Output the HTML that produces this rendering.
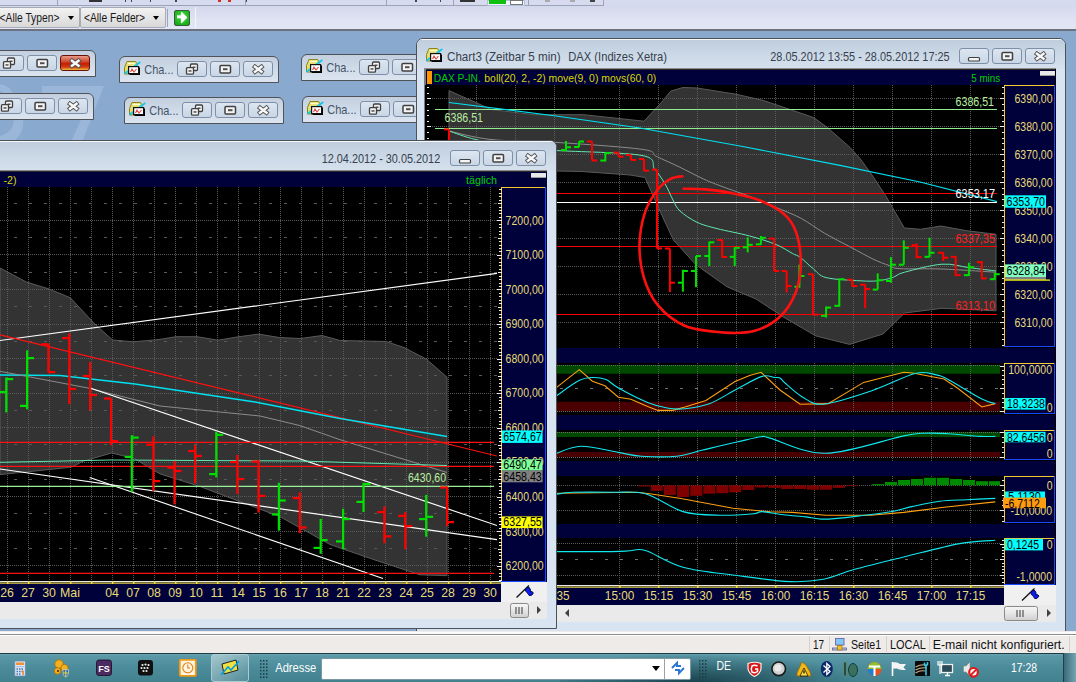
<!DOCTYPE html><html><head><meta charset="utf-8"><style>
*{margin:0;padding:0;box-sizing:border-box}
html,body{width:1076px;height:682px;overflow:hidden}
body{position:relative;background:#8aa9cf;font-family:"Liberation Sans", sans-serif;}
.a{position:absolute}
.btn{position:absolute;border:1px solid #8a9bb3;border-radius:3px;background:linear-gradient(#e4ebf4,#cbd7e6);}
.t{position:absolute;white-space:nowrap;line-height:1}
svg{position:absolute;left:0;top:0}
</style></head><body><div class="a" style="left:0;top:0;width:1076px;height:31px;background:#d5daee"></div><div class="a" style="left:0;top:0;width:604px;height:6px;background:#d6dbef;border-bottom:1px solid #9ea4b8;border-right:1px solid #9ea4b8"></div><svg width="1076" height="682"><g shape-rendering="crispEdges"><rect x="57" y="0" width="1" height="5" fill="#9ea2ae"/><rect x="245" y="0" width="1" height="5" fill="#9ea2ae"/><rect x="386" y="0" width="1" height="5" fill="#9ea2ae"/><rect x="453" y="0" width="1" height="5" fill="#9ea2ae"/><rect x="528" y="0" width="1" height="5" fill="#9ea2ae"/><rect x="89" y="0" width="13" height="2" fill="#333"/><rect x="125" y="0" width="1" height="2" fill="#444"/><rect x="131" y="0" width="1" height="2" fill="#444"/><rect x="150" y="0" width="1" height="2" fill="#444"/><rect x="175" y="0" width="2" height="2" fill="#444"/><rect x="218" y="0" width="3" height="2" fill="#d03020"/><rect x="228" y="0" width="3" height="2" fill="#d03020"/><rect x="246" y="0" width="1" height="2" fill="#444"/><rect x="415" y="0" width="2" height="2" fill="#444"/><rect x="440" y="0" width="1" height="2" fill="#444"/><rect x="460" y="0" width="15" height="2" fill="#333"/><rect x="487" y="0" width="37" height="5" fill="#f0f4fc" stroke="#b0c0d8"/><rect x="489" y="0" width="17" height="4" fill="#10c010"/><rect x="510.5" y="0" width="12" height="4" fill="#fff" stroke="#777"/><rect x="545" y="0" width="5" height="2" fill="#aaa"/><rect x="570" y="0" width="5" height="2" fill="#aaa"/><rect x="590" y="0" width="5" height="2" fill="#444"/></g></svg><div class="a" style="left:0;top:6px;width:1076px;height:23px;background:linear-gradient(#d3d8ec,#dfe3f3 60%,#e3e6f4)"></div><div class="a" style="left:0;top:29px;width:1076px;height:2px;background:#6e7280"></div><div class="a" style="left:-2px;top:7px;width:82px;height:21px;border:1px solid #a7abb5;border-radius:2px;background:linear-gradient(#f2f2f2,#e6e6e6 50%,#d8d8d8)"></div><div class="a" style="left:67.5px;top:16px;width:0;height:0;border-left:3.5px solid transparent;border-right:3.5px solid transparent;border-top:4px solid #000"></div><div class="a" style="left:80px;top:7px;width:86px;height:21px;border:1px solid #a7abb5;border-radius:2px;background:linear-gradient(#f2f2f2,#e6e6e6 50%,#d8d8d8)"></div><div class="a" style="left:153px;top:16px;width:0;height:0;border-left:3.5px solid transparent;border-right:3.5px solid transparent;border-top:4px solid #000"></div><svg width="1076" height="682"><text x="-0.50" y="21.80" font-size="12" fill="#1a1a1a" font-family="Liberation Sans" textLength="60.00" lengthAdjust="spacingAndGlyphs" >&lt;Alle Typen&gt;</text><text x="84.00" y="21.80" font-size="12" fill="#1a1a1a" font-family="Liberation Sans" textLength="61.00" lengthAdjust="spacingAndGlyphs" >&lt;Alle Felder&gt;</text></svg><div class="a" style="left:167px;top:9px;width:1px;height:18px;background:#a0a4b0"></div><div class="a" style="left:174px;top:10px;width:16px;height:16px;border-radius:2px;background:radial-gradient(circle at 50% 40%,#40e040,#10a010);border:1px solid #3a5a3a"></div><svg width="1076" height="682" style="pointer-events:none"><path d="M177 16.8h6" stroke="#fff" stroke-width="3"/><path d="M181.5 12.5 L186.5 17.5 L181.5 22.5Z" fill="#fff" stroke="#fff" stroke-width="1.2" stroke-linejoin="round"/></svg><div class="a" style="left:195px;top:7px;width:1px;height:21px;background:#a8acb8;border-right:1px solid #f4f6fc"></div><svg width="1076" height="682"><path d="M42 86 L104 86 L82 142 L71 142 L91 97 L42 97Z" fill="#9ab6d9"/><path d="M0 84 Q12 86 13 96 L3 96 Q3 92 0 91Z M14 118 L23 118 Q25 134 12 142 L0 142 L0 136 Q14 132 14 118Z" fill="#9ab6d9"/></svg><div class="a" style="left:-10px;top:50px;width:106px;height:27px;border:1px solid #4f5358;border-radius:6px 6px 0 0;background:linear-gradient(#c3cfde,#d2ddea 60%,#dbe4ef)"></div><div class="btn" style="left:-6px;top:55px;width:30px;height:16px;background:linear-gradient(#dce6f1,#c9d6e5);border-color:#7f8fa8"></div><div class="btn" style="left:27px;top:55px;width:30px;height:16px;background:linear-gradient(#dce6f1,#c9d6e5);border-color:#7f8fa8"></div><div class="btn" style="left:60px;top:55px;width:30px;height:16px;background:linear-gradient(#e89a88 0,#d04a30 40%,#c41e00 55%,#d04010 80%,#f0c040);border-color:#6a1008"></div><svg width="1076" height="682"><rect x="7.5" y="58.0" width="7" height="6.5" rx="1" fill="#f4f4f4" stroke="#404040" stroke-width="1.3"/><rect x="9.5" y="60.5" width="3" height="1.5" fill="#505050"/><rect x="3.5" y="61.7" width="7" height="6.5" rx="1" fill="#f4f4f4" stroke="#404040" stroke-width="1.3"/><rect x="5.5" y="64.2" width="3" height="1.5" fill="#505050"/><rect x="37.0" y="59.5" width="10.5" height="7.5" rx="1" fill="#f4f4f4" stroke="#404040" stroke-width="1.5"/><rect x="40.0" y="62.2" width="4.5" height="2" fill="#505050"/><path d="M70.3 59.4 L80.2 67.1 M80.2 59.4 L70.3 67.1" stroke="#505050" stroke-width="4.4"/><path d="M71.0 60.0 L79.5 66.5 M79.5 60.0 L71.0 66.5" stroke="#f8f8f8" stroke-width="2.5"/></svg><div class="a" style="left:-10px;top:93px;width:104px;height:27px;border:1px solid #4f5358;border-radius:6px 6px 0 0;background:linear-gradient(#c3cfde,#d2ddea 60%,#dbe4ef)"></div><div class="btn" style="left:-8px;top:98px;width:30px;height:16px;background:linear-gradient(#dce6f1,#c9d6e5);border-color:#7f8fa8"></div><div class="btn" style="left:25px;top:98px;width:30px;height:16px;background:linear-gradient(#dce6f1,#c9d6e5);border-color:#7f8fa8"></div><div class="btn" style="left:58px;top:98px;width:30px;height:16px;background:linear-gradient(#dce6f1,#c9d6e5);border-color:#7f8fa8"></div><svg width="1076" height="682"><rect x="5.5" y="101.0" width="7" height="6.5" rx="1" fill="#f4f4f4" stroke="#404040" stroke-width="1.3"/><rect x="7.5" y="103.5" width="3" height="1.5" fill="#505050"/><rect x="1.5" y="104.7" width="7" height="6.5" rx="1" fill="#f4f4f4" stroke="#404040" stroke-width="1.3"/><rect x="3.5" y="107.2" width="3" height="1.5" fill="#505050"/><rect x="35.0" y="102.5" width="10.5" height="7.5" rx="1" fill="#f4f4f4" stroke="#404040" stroke-width="1.5"/><rect x="38.0" y="105.2" width="4.5" height="2" fill="#505050"/><path d="M68.3 102.4 L78.2 110.1 M78.2 102.4 L68.3 110.1" stroke="#505050" stroke-width="4.4"/><path d="M69.0 103.0 L77.5 109.5 M77.5 103.0 L69.0 109.5" stroke="#f8f8f8" stroke-width="2.5"/></svg><div class="a" style="left:119px;top:56px;width:160px;height:27px;border:1px solid #4f5358;border-radius:6px 6px 0 0;background:linear-gradient(#c3cfde,#d2ddea 60%,#dbe4ef)"></div><svg width="1076" height="682"><g transform="translate(124,61)"><path d="M3 0.5 L11.5 0.5 L13 2.5 L13 6 L5 13 L0.5 13 L0.5 6.5 Z" fill="#e4dc6c" stroke="#8c8418" stroke-width="1"/><path d="M3.5 2.5 L11 2.5" stroke="#fffbd0" stroke-width="1.5"/><path d="M0.5 12.8 L16.3 1" stroke="#10c8f0" stroke-width="1.8"/><rect x="5.5" y="6.5" width="10.5" height="7.5" fill="#000"/><rect x="4.6" y="5.6" width="10" height="7" fill="#fff" stroke="#111" stroke-width="1.2"/><path d="M6.5 11 L8 8 L10 11 L12.5 8" stroke="#e04848" stroke-width="1.1" fill="none"/></g></svg><svg width="1076" height="682"><text x="144.30" y="73.50" font-size="12.4" fill="#46546a" font-family="Liberation Sans" textLength="29.20" lengthAdjust="spacingAndGlyphs" >Cha...</text></svg><div class="btn" style="left:177px;top:61px;width:30px;height:16px;background:linear-gradient(#dce6f1,#c9d6e5);border-color:#7f8fa8"></div><div class="btn" style="left:210px;top:61px;width:30px;height:16px;background:linear-gradient(#dce6f1,#c9d6e5);border-color:#7f8fa8"></div><div class="btn" style="left:243px;top:61px;width:30px;height:16px;background:linear-gradient(#dce6f1,#c9d6e5);border-color:#7f8fa8"></div><svg width="1076" height="682"><rect x="190.5" y="64.0" width="7" height="6.5" rx="1" fill="#f4f4f4" stroke="#404040" stroke-width="1.3"/><rect x="192.5" y="66.5" width="3" height="1.5" fill="#505050"/><rect x="186.5" y="67.7" width="7" height="6.5" rx="1" fill="#f4f4f4" stroke="#404040" stroke-width="1.3"/><rect x="188.5" y="70.2" width="3" height="1.5" fill="#505050"/><rect x="220.0" y="65.5" width="10.5" height="7.5" rx="1" fill="#f4f4f4" stroke="#404040" stroke-width="1.5"/><rect x="223.0" y="68.2" width="4.5" height="2" fill="#505050"/><path d="M253.3 65.4 L263.2 73.1 M263.2 65.4 L253.3 73.1" stroke="#505050" stroke-width="4.4"/><path d="M254.0 66.0 L262.5 72.5 M262.5 66.0 L254.0 72.5" stroke="#f8f8f8" stroke-width="2.5"/></svg><div class="a" style="left:124px;top:97px;width:160px;height:27px;border:1px solid #4f5358;border-radius:6px 6px 0 0;background:linear-gradient(#c3cfde,#d2ddea 60%,#dbe4ef)"></div><svg width="1076" height="682"><g transform="translate(129,102)"><path d="M3 0.5 L11.5 0.5 L13 2.5 L13 6 L5 13 L0.5 13 L0.5 6.5 Z" fill="#e4dc6c" stroke="#8c8418" stroke-width="1"/><path d="M3.5 2.5 L11 2.5" stroke="#fffbd0" stroke-width="1.5"/><path d="M0.5 12.8 L16.3 1" stroke="#10c8f0" stroke-width="1.8"/><rect x="5.5" y="6.5" width="10.5" height="7.5" fill="#000"/><rect x="4.6" y="5.6" width="10" height="7" fill="#fff" stroke="#111" stroke-width="1.2"/><path d="M6.5 11 L8 8 L10 11 L12.5 8" stroke="#e04848" stroke-width="1.1" fill="none"/></g></svg><svg width="1076" height="682"><text x="149.30" y="114.50" font-size="12.4" fill="#46546a" font-family="Liberation Sans" textLength="29.20" lengthAdjust="spacingAndGlyphs" >Cha...</text></svg><div class="btn" style="left:182px;top:102px;width:30px;height:16px;background:linear-gradient(#dce6f1,#c9d6e5);border-color:#7f8fa8"></div><div class="btn" style="left:215px;top:102px;width:30px;height:16px;background:linear-gradient(#dce6f1,#c9d6e5);border-color:#7f8fa8"></div><div class="btn" style="left:248px;top:102px;width:30px;height:16px;background:linear-gradient(#dce6f1,#c9d6e5);border-color:#7f8fa8"></div><svg width="1076" height="682"><rect x="195.5" y="105.0" width="7" height="6.5" rx="1" fill="#f4f4f4" stroke="#404040" stroke-width="1.3"/><rect x="197.5" y="107.5" width="3" height="1.5" fill="#505050"/><rect x="191.5" y="108.7" width="7" height="6.5" rx="1" fill="#f4f4f4" stroke="#404040" stroke-width="1.3"/><rect x="193.5" y="111.2" width="3" height="1.5" fill="#505050"/><rect x="225.0" y="106.5" width="10.5" height="7.5" rx="1" fill="#f4f4f4" stroke="#404040" stroke-width="1.5"/><rect x="228.0" y="109.2" width="4.5" height="2" fill="#505050"/><path d="M258.3 106.4 L268.2 114.1 M268.2 106.4 L258.3 114.1" stroke="#505050" stroke-width="4.4"/><path d="M259.0 107.0 L267.5 113.5 M267.5 107.0 L259.0 113.5" stroke="#f8f8f8" stroke-width="2.5"/></svg><div class="a" style="left:301px;top:54px;width:160px;height:27px;border:1px solid #4f5358;border-radius:6px 6px 0 0;background:linear-gradient(#c3cfde,#d2ddea 60%,#dbe4ef)"></div><svg width="1076" height="682"><g transform="translate(306,59)"><path d="M3 0.5 L11.5 0.5 L13 2.5 L13 6 L5 13 L0.5 13 L0.5 6.5 Z" fill="#e4dc6c" stroke="#8c8418" stroke-width="1"/><path d="M3.5 2.5 L11 2.5" stroke="#fffbd0" stroke-width="1.5"/><path d="M0.5 12.8 L16.3 1" stroke="#10c8f0" stroke-width="1.8"/><rect x="5.5" y="6.5" width="10.5" height="7.5" fill="#000"/><rect x="4.6" y="5.6" width="10" height="7" fill="#fff" stroke="#111" stroke-width="1.2"/><path d="M6.5 11 L8 8 L10 11 L12.5 8" stroke="#e04848" stroke-width="1.1" fill="none"/></g></svg><svg width="1076" height="682"><text x="326.30" y="71.50" font-size="12.4" fill="#46546a" font-family="Liberation Sans" textLength="29.20" lengthAdjust="spacingAndGlyphs" >Cha...</text></svg><div class="btn" style="left:359px;top:59px;width:30px;height:16px;background:linear-gradient(#dce6f1,#c9d6e5);border-color:#7f8fa8"></div><div class="btn" style="left:392px;top:59px;width:30px;height:16px;background:linear-gradient(#dce6f1,#c9d6e5);border-color:#7f8fa8"></div><div class="btn" style="left:425px;top:59px;width:30px;height:16px;background:linear-gradient(#dce6f1,#c9d6e5);border-color:#7f8fa8"></div><svg width="1076" height="682"><rect x="372.5" y="62.0" width="7" height="6.5" rx="1" fill="#f4f4f4" stroke="#404040" stroke-width="1.3"/><rect x="374.5" y="64.5" width="3" height="1.5" fill="#505050"/><rect x="368.5" y="65.7" width="7" height="6.5" rx="1" fill="#f4f4f4" stroke="#404040" stroke-width="1.3"/><rect x="370.5" y="68.2" width="3" height="1.5" fill="#505050"/><rect x="402.0" y="63.5" width="10.5" height="7.5" rx="1" fill="#f4f4f4" stroke="#404040" stroke-width="1.5"/><rect x="405.0" y="66.2" width="4.5" height="2" fill="#505050"/><path d="M435.3 63.4 L445.2 71.1 M445.2 63.4 L435.3 71.1" stroke="#505050" stroke-width="4.4"/><path d="M436.0 64.0 L444.5 70.5 M444.5 64.0 L436.0 70.5" stroke="#f8f8f8" stroke-width="2.5"/></svg><div class="a" style="left:302px;top:96px;width:160px;height:27px;border:1px solid #4f5358;border-radius:6px 6px 0 0;background:linear-gradient(#c3cfde,#d2ddea 60%,#dbe4ef)"></div><svg width="1076" height="682"><g transform="translate(307,101)"><path d="M3 0.5 L11.5 0.5 L13 2.5 L13 6 L5 13 L0.5 13 L0.5 6.5 Z" fill="#e4dc6c" stroke="#8c8418" stroke-width="1"/><path d="M3.5 2.5 L11 2.5" stroke="#fffbd0" stroke-width="1.5"/><path d="M0.5 12.8 L16.3 1" stroke="#10c8f0" stroke-width="1.8"/><rect x="5.5" y="6.5" width="10.5" height="7.5" fill="#000"/><rect x="4.6" y="5.6" width="10" height="7" fill="#fff" stroke="#111" stroke-width="1.2"/><path d="M6.5 11 L8 8 L10 11 L12.5 8" stroke="#e04848" stroke-width="1.1" fill="none"/></g></svg><svg width="1076" height="682"><text x="327.30" y="113.50" font-size="12.4" fill="#46546a" font-family="Liberation Sans" textLength="29.20" lengthAdjust="spacingAndGlyphs" >Cha...</text></svg><div class="btn" style="left:360px;top:101px;width:30px;height:16px;background:linear-gradient(#dce6f1,#c9d6e5);border-color:#7f8fa8"></div><div class="btn" style="left:393px;top:101px;width:30px;height:16px;background:linear-gradient(#dce6f1,#c9d6e5);border-color:#7f8fa8"></div><div class="btn" style="left:426px;top:101px;width:30px;height:16px;background:linear-gradient(#dce6f1,#c9d6e5);border-color:#7f8fa8"></div><svg width="1076" height="682"><rect x="373.5" y="104.0" width="7" height="6.5" rx="1" fill="#f4f4f4" stroke="#404040" stroke-width="1.3"/><rect x="375.5" y="106.5" width="3" height="1.5" fill="#505050"/><rect x="369.5" y="107.7" width="7" height="6.5" rx="1" fill="#f4f4f4" stroke="#404040" stroke-width="1.3"/><rect x="371.5" y="110.2" width="3" height="1.5" fill="#505050"/><rect x="403.0" y="105.5" width="10.5" height="7.5" rx="1" fill="#f4f4f4" stroke="#404040" stroke-width="1.5"/><rect x="406.0" y="108.2" width="4.5" height="2" fill="#505050"/><path d="M436.3 105.4 L446.2 113.1 M446.2 105.4 L436.3 113.1" stroke="#505050" stroke-width="4.4"/><path d="M437.0 106.0 L445.5 112.5 M445.5 106.0 L437.0 112.5" stroke="#f8f8f8" stroke-width="2.5"/></svg><div class="a" style="left:416px;top:38px;width:650px;height:594px;border:1px solid #4e5156;border-radius:7px 7px 0 0;background:#d6e2ef;overflow:hidden"><div class="a" style="left:0;top:0;width:100%;height:1px;background:#f4f7fb"></div><div class="a" style="left:0;top:1px;width:100%;height:29px;background:linear-gradient(#bfcddd,#cbd8e6 50%,#d6e1ed)"></div><div class="a" style="left:0;top:30px;width:100%;height:564px;background:#d8e4f1"></div></div><svg width="1076" height="682"><g transform="translate(426,48)"><path d="M3 0.5 L11.5 0.5 L13 2.5 L13 6 L5 13 L0.5 13 L0.5 6.5 Z" fill="#e4dc6c" stroke="#8c8418" stroke-width="1"/><path d="M3.5 2.5 L11 2.5" stroke="#fffbd0" stroke-width="1.5"/><path d="M0.5 12.8 L16.3 1" stroke="#10c8f0" stroke-width="1.8"/><rect x="5.5" y="6.5" width="10.5" height="7.5" fill="#000"/><rect x="4.6" y="5.6" width="10" height="7" fill="#fff" stroke="#111" stroke-width="1.2"/><path d="M6.5 11 L8 8 L10 11 L12.5 8" stroke="#e04848" stroke-width="1.1" fill="none"/></g></svg><svg width="1076" height="682"><text x="447.00" y="60.50" font-size="12.4" fill="#36404e" font-family="Liberation Sans" textLength="113.60" lengthAdjust="spacingAndGlyphs" >Chart3 (Zeitbar 5 min)</text><text x="568.30" y="60.50" font-size="12.4" fill="#36404e" font-family="Liberation Sans" textLength="98.70" lengthAdjust="spacingAndGlyphs" >DAX (Indizes Xetra)</text><text x="770.30" y="60.50" font-size="12.4" fill="#36404e" font-family="Liberation Sans" textLength="179.30" lengthAdjust="spacingAndGlyphs" >28.05.2012 13:55 - 28.05.2012 17:25</text></svg><div class="btn" style="left:959px;top:48px;width:30px;height:16px;background:linear-gradient(#dce6f1,#c9d6e5);border-color:#7f8fa8"></div><div class="btn" style="left:992px;top:48px;width:30px;height:16px;background:linear-gradient(#dce6f1,#c9d6e5);border-color:#7f8fa8"></div><div class="btn" style="left:1025px;top:48px;width:30px;height:16px;background:linear-gradient(#dce6f1,#c9d6e5);border-color:#7f8fa8"></div><svg width="1076" height="682"><rect x="968.5" y="57.5" width="11" height="3.5" rx="1" fill="#f4f4f4" stroke="#404040" stroke-width="1.2"/><rect x="1002.0" y="52.5" width="10.5" height="7.5" rx="1" fill="#f4f4f4" stroke="#404040" stroke-width="1.5"/><rect x="1005.0" y="55.2" width="4.5" height="2" fill="#505050"/><path d="M1035.3 52.4 L1045.2 60.1 M1045.2 52.4 L1035.3 60.1" stroke="#505050" stroke-width="4.4"/><path d="M1036.0 53.0 L1044.5 59.5 M1044.5 53.0 L1036.0 59.5" stroke="#f8f8f8" stroke-width="2.5"/></svg><svg width="1076" height="682"><defs><clipPath id="c3main"><rect x="425" y="85" width="575" height="263"/></clipPath><clipPath id="c3p2"><rect x="425" y="363" width="575" height="50"/></clipPath><clipPath id="c3p3"><rect x="425" y="430" width="575" height="31"/></clipPath><clipPath id="c3p4"><rect x="425" y="476" width="575" height="47"/></clipPath><clipPath id="c3p5"><rect x="425" y="537" width="575" height="47"/></clipPath></defs><rect x="424" y="69" width="632" height="536" fill="#00003a"/><rect x="424" y="68" width="632" height="1" fill="#8c8c8c" shape-rendering="crispEdges"/><rect x="424" y="69" width="632" height="1" fill="#2a2a2a" shape-rendering="crispEdges"/><rect x="424" y="69" width="2" height="553" fill="#7a7e84"/><rect x="427" y="71" width="5" height="13" fill="#ff9800"/><rect x="1040" y="71" width="15" height="5" fill="#e8e8e8"/><rect x="1040" y="75" width="15" height="1" fill="#9a9a9a"/><rect x="425" y="85" width="631" height="263" fill="#000"/><rect x="425" y="363" width="631" height="52" fill="#000"/><rect x="425" y="430" width="631" height="31" fill="#000"/><rect x="425" y="476" width="631" height="48" fill="#000"/><rect x="425" y="538" width="631" height="47" fill="#000"/><rect x="1000" y="85" width="4" height="263" fill="#000"/><rect x="1000" y="363" width="4" height="52" fill="#000"/><rect x="1000" y="430" width="4" height="31" fill="#000"/><rect x="1000" y="476" width="4" height="48" fill="#000"/><rect x="1000" y="538" width="4" height="47" fill="#000"/><g shape-rendering="crispEdges"><rect x="1004" y="85" width="51" height="262" fill="#00003a"/><rect x="1054" y="85" width="1" height="262" fill="#1848ff"/><rect x="1004" y="346" width="51" height="1" fill="#1848ff"/><rect x="1004" y="85" width="1" height="261" fill="#f8c830"/><rect x="1004" y="85" width="50" height="1" fill="#f8c830"/></g><g shape-rendering="crispEdges"><rect x="1004" y="363" width="51" height="51" fill="#00003a"/><rect x="1054" y="363" width="1" height="51" fill="#1848ff"/><rect x="1004" y="413" width="51" height="1" fill="#1848ff"/><rect x="1004" y="363" width="1" height="50" fill="#f8c830"/><rect x="1004" y="363" width="50" height="1" fill="#f8c830"/></g><g shape-rendering="crispEdges"><rect x="1004" y="430" width="51" height="30" fill="#00003a"/><rect x="1054" y="430" width="1" height="30" fill="#1848ff"/><rect x="1004" y="459" width="51" height="1" fill="#1848ff"/><rect x="1004" y="430" width="1" height="29" fill="#f8c830"/><rect x="1004" y="430" width="50" height="1" fill="#f8c830"/></g><g shape-rendering="crispEdges"><rect x="1004" y="476" width="51" height="47" fill="#00003a"/><rect x="1054" y="476" width="1" height="47" fill="#1848ff"/><rect x="1004" y="522" width="51" height="1" fill="#1848ff"/><rect x="1004" y="476" width="1" height="46" fill="#f8c830"/><rect x="1004" y="476" width="50" height="1" fill="#f8c830"/></g><g shape-rendering="crispEdges"><rect x="1004" y="538" width="51" height="47" fill="#00003a"/><rect x="1054" y="538" width="1" height="47" fill="#1848ff"/><rect x="1004" y="584" width="51" height="1" fill="#1848ff"/><rect x="1004" y="538" width="1" height="46" fill="#f8c830"/><rect x="1004" y="538" width="50" height="1" fill="#f8c830"/></g><rect x="1055" y="69" width="1" height="536" fill="#000" shape-rendering="crispEdges"/><g clip-path="url(#c3main)"><polygon points="449.0,90.6 491.6,109.6 534.5,114.7 583.6,114.7 644.0,121.2 660.0,104.0 670.7,91.1 683.0,87.5 697.0,88.0 736.0,94.2 762.7,100.3 793.4,110.6 813.8,117.7 828.0,128.0 850.4,147.8 860.0,158.5 870.5,172.8 885.5,195.4 895.6,213.0 904.4,228.0 920.7,229.3 940.8,226.0 965.8,230.6 996.0,234.3 996.0,310.8 942.0,308.3 904.6,313.0 883.0,334.0 849.6,344.4 816.0,336.0 785.0,318.0 756.0,299.0 727.0,286.8 695.7,264.5 673.4,240.0 665.0,222.0 655.0,200.0 645.0,177.5 630.0,175.0 582.0,171.5 556.0,171.0 520.0,168.0 449.0,160.0" fill="#333333" stroke="#5a5a5a" stroke-width="1"/><line x1="476.5" y1="85" x2="476.5" y2="348" stroke="#5a5a5a" stroke-width="1" stroke-dasharray="1,1" shape-rendering="crispEdges"/><line x1="515.5" y1="85" x2="515.5" y2="348" stroke="#5a5a5a" stroke-width="1" stroke-dasharray="1,1" shape-rendering="crispEdges"/><line x1="554.5" y1="85" x2="554.5" y2="348" stroke="#5a5a5a" stroke-width="1" stroke-dasharray="1,1" shape-rendering="crispEdges"/><line x1="619.5" y1="85" x2="619.5" y2="348" stroke="#5a5a5a" stroke-width="1" stroke-dasharray="1,1" shape-rendering="crispEdges"/><line x1="658.5" y1="85" x2="658.5" y2="348" stroke="#5a5a5a" stroke-width="1" stroke-dasharray="1,1" shape-rendering="crispEdges"/><line x1="697.5" y1="85" x2="697.5" y2="348" stroke="#5a5a5a" stroke-width="1" stroke-dasharray="1,1" shape-rendering="crispEdges"/><line x1="736.5" y1="85" x2="736.5" y2="348" stroke="#5a5a5a" stroke-width="1" stroke-dasharray="1,1" shape-rendering="crispEdges"/><line x1="775.5" y1="85" x2="775.5" y2="348" stroke="#5a5a5a" stroke-width="1" stroke-dasharray="1,1" shape-rendering="crispEdges"/><line x1="814.5" y1="85" x2="814.5" y2="348" stroke="#5a5a5a" stroke-width="1" stroke-dasharray="1,1" shape-rendering="crispEdges"/><line x1="853.5" y1="85" x2="853.5" y2="348" stroke="#5a5a5a" stroke-width="1" stroke-dasharray="1,1" shape-rendering="crispEdges"/><line x1="892.5" y1="85" x2="892.5" y2="348" stroke="#5a5a5a" stroke-width="1" stroke-dasharray="1,1" shape-rendering="crispEdges"/><line x1="931.5" y1="85" x2="931.5" y2="348" stroke="#5a5a5a" stroke-width="1" stroke-dasharray="1,1" shape-rendering="crispEdges"/><line x1="970.5" y1="85" x2="970.5" y2="348" stroke="#5a5a5a" stroke-width="1" stroke-dasharray="1,1" shape-rendering="crispEdges"/><line x1="432" y1="98.5" x2="1000" y2="98.5" stroke="#5a5a5a" stroke-width="1" stroke-dasharray="1,1" shape-rendering="crispEdges"/><line x1="432" y1="126.5" x2="1000" y2="126.5" stroke="#5a5a5a" stroke-width="1" stroke-dasharray="1,1" shape-rendering="crispEdges"/><line x1="432" y1="154.5" x2="1000" y2="154.5" stroke="#5a5a5a" stroke-width="1" stroke-dasharray="1,1" shape-rendering="crispEdges"/><line x1="432" y1="182.5" x2="1000" y2="182.5" stroke="#5a5a5a" stroke-width="1" stroke-dasharray="1,1" shape-rendering="crispEdges"/><line x1="432" y1="210.5" x2="1000" y2="210.5" stroke="#5a5a5a" stroke-width="1" stroke-dasharray="1,1" shape-rendering="crispEdges"/><line x1="432" y1="238.5" x2="1000" y2="238.5" stroke="#5a5a5a" stroke-width="1" stroke-dasharray="1,1" shape-rendering="crispEdges"/><line x1="432" y1="266.5" x2="1000" y2="266.5" stroke="#5a5a5a" stroke-width="1" stroke-dasharray="1,1" shape-rendering="crispEdges"/><line x1="432" y1="294.5" x2="1000" y2="294.5" stroke="#5a5a5a" stroke-width="1" stroke-dasharray="1,1" shape-rendering="crispEdges"/><line x1="432" y1="322.5" x2="1000" y2="322.5" stroke="#5a5a5a" stroke-width="1" stroke-dasharray="1,1" shape-rendering="crispEdges"/><rect x="427" y="87" width="2" height="1" fill="#f0f0f0" shape-rendering="crispEdges"/><rect x="427" y="93" width="2" height="1" fill="#f0f0f0" shape-rendering="crispEdges"/><rect x="427" y="98" width="4" height="1" fill="#f0f0f0" shape-rendering="crispEdges"/><rect x="427" y="104" width="2" height="1" fill="#f0f0f0" shape-rendering="crispEdges"/><rect x="427" y="110" width="2" height="1" fill="#f0f0f0" shape-rendering="crispEdges"/><rect x="427" y="115" width="2" height="1" fill="#f0f0f0" shape-rendering="crispEdges"/><rect x="427" y="121" width="2" height="1" fill="#f0f0f0" shape-rendering="crispEdges"/><rect x="427" y="126" width="4" height="1" fill="#f0f0f0" shape-rendering="crispEdges"/><rect x="427" y="132" width="2" height="1" fill="#f0f0f0" shape-rendering="crispEdges"/><rect x="427" y="138" width="2" height="1" fill="#f0f0f0" shape-rendering="crispEdges"/><rect x="427" y="143" width="2" height="1" fill="#f0f0f0" shape-rendering="crispEdges"/><rect x="427" y="149" width="2" height="1" fill="#f0f0f0" shape-rendering="crispEdges"/><rect x="427" y="154" width="4" height="1" fill="#f0f0f0" shape-rendering="crispEdges"/><rect x="427" y="160" width="2" height="1" fill="#f0f0f0" shape-rendering="crispEdges"/><rect x="427" y="166" width="2" height="1" fill="#f0f0f0" shape-rendering="crispEdges"/><rect x="427" y="171" width="2" height="1" fill="#f0f0f0" shape-rendering="crispEdges"/><rect x="427" y="177" width="2" height="1" fill="#f0f0f0" shape-rendering="crispEdges"/><rect x="427" y="182" width="4" height="1" fill="#f0f0f0" shape-rendering="crispEdges"/><rect x="427" y="188" width="2" height="1" fill="#f0f0f0" shape-rendering="crispEdges"/><rect x="427" y="194" width="2" height="1" fill="#f0f0f0" shape-rendering="crispEdges"/><rect x="427" y="199" width="2" height="1" fill="#f0f0f0" shape-rendering="crispEdges"/><rect x="427" y="205" width="2" height="1" fill="#f0f0f0" shape-rendering="crispEdges"/><rect x="427" y="210" width="4" height="1" fill="#f0f0f0" shape-rendering="crispEdges"/><rect x="427" y="216" width="2" height="1" fill="#f0f0f0" shape-rendering="crispEdges"/><rect x="427" y="222" width="2" height="1" fill="#f0f0f0" shape-rendering="crispEdges"/><rect x="427" y="227" width="2" height="1" fill="#f0f0f0" shape-rendering="crispEdges"/><rect x="427" y="233" width="2" height="1" fill="#f0f0f0" shape-rendering="crispEdges"/><rect x="427" y="238" width="4" height="1" fill="#f0f0f0" shape-rendering="crispEdges"/><rect x="427" y="244" width="2" height="1" fill="#f0f0f0" shape-rendering="crispEdges"/><rect x="427" y="250" width="2" height="1" fill="#f0f0f0" shape-rendering="crispEdges"/><rect x="427" y="255" width="2" height="1" fill="#f0f0f0" shape-rendering="crispEdges"/><rect x="427" y="261" width="2" height="1" fill="#f0f0f0" shape-rendering="crispEdges"/><rect x="427" y="266" width="4" height="1" fill="#f0f0f0" shape-rendering="crispEdges"/><rect x="427" y="272" width="2" height="1" fill="#f0f0f0" shape-rendering="crispEdges"/><rect x="427" y="278" width="2" height="1" fill="#f0f0f0" shape-rendering="crispEdges"/><rect x="427" y="283" width="2" height="1" fill="#f0f0f0" shape-rendering="crispEdges"/><rect x="427" y="289" width="2" height="1" fill="#f0f0f0" shape-rendering="crispEdges"/><rect x="427" y="294" width="4" height="1" fill="#f0f0f0" shape-rendering="crispEdges"/><rect x="427" y="300" width="2" height="1" fill="#f0f0f0" shape-rendering="crispEdges"/><rect x="427" y="306" width="2" height="1" fill="#f0f0f0" shape-rendering="crispEdges"/><rect x="427" y="311" width="2" height="1" fill="#f0f0f0" shape-rendering="crispEdges"/><rect x="427" y="317" width="2" height="1" fill="#f0f0f0" shape-rendering="crispEdges"/><rect x="427" y="322" width="4" height="1" fill="#f0f0f0" shape-rendering="crispEdges"/><rect x="427" y="328" width="2" height="1" fill="#f0f0f0" shape-rendering="crispEdges"/><rect x="427" y="334" width="2" height="1" fill="#f0f0f0" shape-rendering="crispEdges"/><rect x="427" y="339" width="2" height="1" fill="#f0f0f0" shape-rendering="crispEdges"/><rect x="427" y="345" width="2" height="1" fill="#f0f0f0" shape-rendering="crispEdges"/><line x1="435" y1="109.5" x2="997" y2="109.5" stroke="#90ee90" stroke-width="1" shape-rendering="crispEdges"/><line x1="435" y1="128.5" x2="997" y2="128.5" stroke="#90ee90" stroke-width="1" shape-rendering="crispEdges"/><line x1="425" y1="193.5" x2="997" y2="193.5" stroke="#ff0000" stroke-width="1" shape-rendering="crispEdges"/><line x1="425" y1="202.5" x2="997" y2="202.5" stroke="#ffffff" stroke-width="1.2" shape-rendering="crispEdges"/><line x1="425" y1="246.5" x2="997" y2="246.5" stroke="#ff0000" stroke-width="1" shape-rendering="crispEdges"/><line x1="425" y1="314.5" x2="997" y2="314.5" stroke="#ff0000" stroke-width="1" shape-rendering="crispEdges"/><polyline points="449,102.5 556,116 640,128 740,146 840,165.3 920,182 997,201.7" fill="none" stroke="#00e0f0" stroke-width="1.2"/><path d="M449.0 131.0 C456.0 132.4 473.2 137.6 491.0 139.5 C508.8 141.4 530.8 140.8 556.0 142.4 C581.2 144.0 625.2 147.0 642.0 149.3 C658.8 151.7 650.3 153.6 656.5 156.5 C662.7 159.4 671.1 163.0 679.0 166.8 C686.9 170.6 696.2 175.7 703.7 179.1 C711.2 182.5 714.9 183.8 724.3 187.3 C733.7 190.8 751.4 196.8 760.0 200.2 C768.6 203.5 769.3 204.4 776.0 207.4 C782.7 210.4 792.2 213.6 800.3 217.9 C808.4 222.2 816.2 228.3 824.5 233.2 C832.8 238.0 842.2 242.7 850.3 247.0 C858.4 251.3 866.4 255.9 872.9 259.0 C879.4 262.1 884.5 263.9 889.0 265.5 C893.5 267.1 891.2 268.1 900.0 268.7 C908.8 269.3 926.0 268.4 942.0 269.0 C958.0 269.6 987.0 271.7 996.0 272.2" fill="none" stroke="#8c8c8c" stroke-width="1"/><path d="M449.0 131.0 C453.5 132.4 464.2 136.8 476.0 139.6 C487.8 142.4 506.7 146.2 520.0 148.0 C533.3 149.8 535.7 149.2 556.0 150.5 C576.3 151.8 625.6 152.4 642.0 155.5 C658.4 158.6 650.7 164.2 654.5 168.8 C658.3 173.4 661.6 178.0 664.7 183.2 C667.8 188.4 670.5 195.4 673.0 200.0 C675.5 204.6 676.0 207.3 680.0 211.0 C684.0 214.7 691.1 219.5 697.3 222.4 C703.5 225.3 708.3 226.3 717.0 228.6 C725.7 230.9 739.9 233.3 749.7 236.0 C759.5 238.7 768.9 241.6 776.0 244.5 C783.1 247.4 788.2 251.2 792.3 253.4 C796.3 255.6 796.8 254.8 800.3 257.4 C803.8 259.9 808.9 265.3 813.2 268.7 C817.5 272.1 818.3 275.6 826.1 277.6 C833.9 279.6 851.4 280.3 860.0 280.8 C868.6 281.3 872.3 281.3 877.7 280.8 C883.1 280.3 887.8 279.0 892.3 277.6 C896.8 276.2 896.3 274.4 904.6 272.2 C912.9 270.0 931.2 264.9 942.0 264.2 C952.8 263.4 960.4 266.6 969.4 267.7 C978.4 268.8 991.6 270.4 996.0 271.0" fill="none" stroke="#60e8b0" stroke-width="1"/><rect x="448" y="129.4" width="2" height="30.599999999999994" fill="#ff0000"/><rect x="444" y="128.4" width="5" height="2" fill="#ff0000"/><rect x="449" y="159" width="5" height="2" fill="#ff0000"/><rect x="565" y="141" width="2" height="9.800000000000011" fill="#00e000"/><rect x="561" y="149" width="5" height="2" fill="#00e000"/><rect x="566" y="146.3" width="5" height="2" fill="#00e000"/><rect x="578" y="141.5" width="2" height="5.800000000000011" fill="#00e000"/><rect x="574" y="146" width="5" height="2" fill="#00e000"/><rect x="579" y="140.5" width="5" height="2" fill="#00e000"/><rect x="591" y="141.5" width="2" height="19.0" fill="#ff0000"/><rect x="587" y="140.5" width="5" height="2" fill="#ff0000"/><rect x="592" y="159.5" width="5" height="2" fill="#ff0000"/><rect x="604.3" y="152.6" width="2" height="8.800000000000011" fill="#00e000"/><rect x="600.3" y="159.5" width="5" height="2" fill="#00e000"/><rect x="605.3" y="152" width="5" height="2" fill="#00e000"/><rect x="617.5" y="152.6" width="2" height="4.0" fill="#ff0000"/><rect x="613.5" y="151.6" width="5" height="2" fill="#ff0000"/><rect x="618.5" y="155.6" width="5" height="2" fill="#ff0000"/><rect x="630" y="155.2" width="2" height="4.800000000000011" fill="#ff0000"/><rect x="626" y="154" width="5" height="2" fill="#ff0000"/><rect x="631" y="159" width="5" height="2" fill="#ff0000"/><rect x="643" y="159" width="2" height="11.699999999999989" fill="#ff0000"/><rect x="639" y="158" width="5" height="2" fill="#ff0000"/><rect x="644" y="169.7" width="5" height="2" fill="#ff0000"/><rect x="656" y="169.6" width="2" height="78.9" fill="#ff0000"/><rect x="652" y="168.6" width="5" height="2" fill="#ff0000"/><rect x="657" y="247.5" width="5" height="2" fill="#ff0000"/><rect x="668.9" y="248.5" width="2" height="43.5" fill="#ff0000"/><rect x="664.9" y="247.5" width="5" height="2" fill="#ff0000"/><rect x="669.9" y="281.7" width="5" height="2" fill="#ff0000"/><rect x="681.9" y="269.7" width="2" height="22.0" fill="#00e000"/><rect x="677.9" y="281.7" width="5" height="2" fill="#00e000"/><rect x="682.9" y="270" width="5" height="2" fill="#00e000"/><rect x="695" y="256" width="2" height="31.19999999999999" fill="#00e000"/><rect x="691" y="270" width="5" height="2" fill="#00e000"/><rect x="696" y="255" width="5" height="2" fill="#00e000"/><rect x="708.3" y="241.6" width="2" height="24.400000000000006" fill="#00e000"/><rect x="704.3" y="255" width="5" height="2" fill="#00e000"/><rect x="709.3" y="241.3" width="5" height="2" fill="#00e000"/><rect x="721.2" y="239.8" width="2" height="17.5" fill="#ff0000"/><rect x="717.2" y="239" width="5" height="2" fill="#ff0000"/><rect x="722.2" y="256" width="5" height="2" fill="#ff0000"/><rect x="733.7" y="247.3" width="2" height="18.69999999999999" fill="#00e000"/><rect x="729.7" y="255.8" width="5" height="2" fill="#00e000"/><rect x="734.7" y="246.8" width="5" height="2" fill="#00e000"/><rect x="746.7" y="237.3" width="2" height="15.0" fill="#00e000"/><rect x="742.7" y="246.3" width="5" height="2" fill="#00e000"/><rect x="747.7" y="243.8" width="5" height="2" fill="#00e000"/><rect x="759.9" y="236" width="2" height="8.800000000000011" fill="#00e000"/><rect x="755.9" y="243.3" width="5" height="2" fill="#00e000"/><rect x="760.9" y="236.8" width="5" height="2" fill="#00e000"/><rect x="773.1" y="238.6" width="2" height="32.400000000000006" fill="#ff0000"/><rect x="769.1" y="237.6" width="5" height="2" fill="#ff0000"/><rect x="774.1" y="270" width="5" height="2" fill="#ff0000"/><rect x="785.6" y="271" width="2" height="21.399999999999977" fill="#ff0000"/><rect x="781.6" y="270" width="5" height="2" fill="#ff0000"/><rect x="786.6" y="285" width="5" height="2" fill="#ff0000"/><rect x="798.4" y="264.7" width="2" height="22.900000000000034" fill="#00e000"/><rect x="794.4" y="285.7" width="5" height="2" fill="#00e000"/><rect x="799.4" y="275" width="5" height="2" fill="#00e000"/><rect x="811.9" y="274.2" width="2" height="40.80000000000001" fill="#ff0000"/><rect x="807.9" y="273.2" width="5" height="2" fill="#ff0000"/><rect x="812.9" y="313.6" width="5" height="2" fill="#ff0000"/><rect x="825.1" y="306.6" width="2" height="11.0" fill="#00e000"/><rect x="821.1" y="314.8" width="5" height="2" fill="#00e000"/><rect x="826.1" y="306.6" width="5" height="2" fill="#00e000"/><rect x="838.3" y="278.4" width="2" height="28.200000000000045" fill="#00e000"/><rect x="834.3" y="304.8" width="5" height="2" fill="#00e000"/><rect x="839.3" y="278.2" width="5" height="2" fill="#00e000"/><rect x="851.3" y="279.7" width="2" height="7.0" fill="#ff0000"/><rect x="847.3" y="278.7" width="5" height="2" fill="#ff0000"/><rect x="852.3" y="285" width="5" height="2" fill="#ff0000"/><rect x="864.2" y="284.2" width="2" height="24.100000000000023" fill="#ff0000"/><rect x="860.2" y="283.7" width="5" height="2" fill="#ff0000"/><rect x="865.2" y="288.1" width="5" height="2" fill="#ff0000"/><rect x="876.7" y="273.4" width="2" height="16.200000000000045" fill="#00e000"/><rect x="872.7" y="288.6" width="5" height="2" fill="#00e000"/><rect x="877.7" y="279.2" width="5" height="2" fill="#00e000"/><rect x="889.9" y="257.2" width="2" height="25.5" fill="#00e000"/><rect x="885.9" y="280" width="5" height="2" fill="#00e000"/><rect x="890.9" y="263.7" width="5" height="2" fill="#00e000"/><rect x="902.8" y="240.3" width="2" height="24.399999999999977" fill="#00e000"/><rect x="898.8" y="263.7" width="5" height="2" fill="#00e000"/><rect x="903.8" y="246.8" width="5" height="2" fill="#00e000"/><rect x="915.6" y="243.5" width="2" height="14.199999999999989" fill="#ff0000"/><rect x="911.6" y="244.3" width="5" height="2" fill="#ff0000"/><rect x="916.6" y="256.2" width="5" height="2" fill="#ff0000"/><rect x="928.5" y="237.8" width="2" height="19.399999999999977" fill="#00e000"/><rect x="924.5" y="255.8" width="5" height="2" fill="#00e000"/><rect x="929.5" y="251.8" width="5" height="2" fill="#00e000"/><rect x="942.2" y="252.3" width="2" height="8.699999999999989" fill="#ff0000"/><rect x="938.2" y="251.8" width="5" height="2" fill="#ff0000"/><rect x="943.2" y="256.7" width="5" height="2" fill="#ff0000"/><rect x="954.7" y="256" width="2" height="20" fill="#ff0000"/><rect x="950.7" y="255.8" width="5" height="2" fill="#ff0000"/><rect x="955.7" y="274.2" width="5" height="2" fill="#ff0000"/><rect x="967.9" y="262.7" width="2" height="13.300000000000011" fill="#00e000"/><rect x="963.9" y="274.2" width="5" height="2" fill="#00e000"/><rect x="968.9" y="266.2" width="5" height="2" fill="#00e000"/><rect x="980.8" y="261" width="2" height="18.19999999999999" fill="#ff0000"/><rect x="976.8" y="261.2" width="5" height="2" fill="#ff0000"/><rect x="981.8" y="277.4" width="5" height="2" fill="#ff0000"/><rect x="993.8" y="272.7" width="2" height="7.0" fill="#00e000"/><rect x="989.8" y="278.2" width="5" height="2" fill="#00e000"/><rect x="994.8" y="273.2" width="5" height="2" fill="#00e000"/><path d="M682.4 176.2 C680.5 176.6 675.2 176.4 671.0 178.7 C666.8 181.0 661.7 184.4 657.4 190.0 C653.1 195.6 648.0 203.3 645.0 212.4 C642.0 221.5 639.7 234.0 639.5 244.8 C639.3 255.6 640.7 267.2 643.7 277.2 C646.7 287.2 650.5 296.5 657.4 304.6 C664.2 312.7 673.6 321.1 684.8 325.8 C696.0 330.5 713.1 331.8 724.7 332.6 C736.4 333.4 745.6 333.4 754.7 330.8 C763.9 328.2 772.8 323.4 779.6 317.0 C786.5 310.6 792.3 301.3 795.8 292.2 C799.3 283.1 800.8 272.2 800.8 262.2 C800.8 252.2 798.8 240.0 796.0 232.0 C793.2 224.0 790.0 219.2 784.0 214.0 C778.0 208.8 768.2 203.9 760.0 200.5 C751.8 197.1 743.9 195.5 734.7 193.7 C725.5 191.8 713.3 190.2 704.8 189.4 C696.3 188.6 687.1 188.8 683.6 188.7" fill="none" stroke="#ff1010" stroke-width="2.6" stroke-linejoin="round" stroke-linecap="round"/><text x="444.60" y="121.60" font-size="12" fill="#b8f0a0" font-family="Liberation Sans" textLength="38.40" lengthAdjust="spacingAndGlyphs" >6386,51</text><text x="955.60" y="105.50" font-size="12" fill="#b8f0a0" font-family="Liberation Sans" textLength="38.40" lengthAdjust="spacingAndGlyphs" >6386,51</text><text x="955.50" y="198.30" font-size="12" fill="#ffffff" font-family="Liberation Sans" textLength="39.50" lengthAdjust="spacingAndGlyphs" >6353,17</text><text x="955.50" y="242.50" font-size="12" fill="#ff2020" font-family="Liberation Sans" textLength="39.50" lengthAdjust="spacingAndGlyphs" >6337,35</text><text x="955.50" y="310.00" font-size="12" fill="#ff2020" font-family="Liberation Sans" textLength="39.50" lengthAdjust="spacingAndGlyphs" >6313,10</text></g><text x="433.80" y="81.80" font-size="11.8" fill="#00d000" font-family="Liberation Sans" textLength="47.00" lengthAdjust="spacingAndGlyphs" >DAX P-IN.</text><text x="484.30" y="81.80" font-size="11.8" fill="#d8d800" font-family="Liberation Sans" textLength="172.00" lengthAdjust="spacingAndGlyphs" >boll(20, 2, -2) move(9, 0) movs(60, 0)</text><text x="971.20" y="81.80" font-size="11.8" fill="#00d000" font-family="Liberation Sans" textLength="29.00" lengthAdjust="spacingAndGlyphs" >5 mins</text><rect x="1001.5" y="87" width="2.5" height="1" fill="#f0f0f0" shape-rendering="crispEdges"/><rect x="1001.5" y="93" width="2.5" height="1" fill="#f0f0f0" shape-rendering="crispEdges"/><rect x="1000" y="98" width="4" height="1" fill="#f0f0f0" shape-rendering="crispEdges"/><rect x="1001.5" y="104" width="2.5" height="1" fill="#f0f0f0" shape-rendering="crispEdges"/><rect x="1001.5" y="110" width="2.5" height="1" fill="#f0f0f0" shape-rendering="crispEdges"/><rect x="1001.5" y="115" width="2.5" height="1" fill="#f0f0f0" shape-rendering="crispEdges"/><rect x="1001.5" y="121" width="2.5" height="1" fill="#f0f0f0" shape-rendering="crispEdges"/><rect x="1000" y="126" width="4" height="1" fill="#f0f0f0" shape-rendering="crispEdges"/><rect x="1001.5" y="132" width="2.5" height="1" fill="#f0f0f0" shape-rendering="crispEdges"/><rect x="1001.5" y="138" width="2.5" height="1" fill="#f0f0f0" shape-rendering="crispEdges"/><rect x="1001.5" y="143" width="2.5" height="1" fill="#f0f0f0" shape-rendering="crispEdges"/><rect x="1001.5" y="149" width="2.5" height="1" fill="#f0f0f0" shape-rendering="crispEdges"/><rect x="1000" y="154" width="4" height="1" fill="#f0f0f0" shape-rendering="crispEdges"/><rect x="1001.5" y="160" width="2.5" height="1" fill="#f0f0f0" shape-rendering="crispEdges"/><rect x="1001.5" y="166" width="2.5" height="1" fill="#f0f0f0" shape-rendering="crispEdges"/><rect x="1001.5" y="171" width="2.5" height="1" fill="#f0f0f0" shape-rendering="crispEdges"/><rect x="1001.5" y="177" width="2.5" height="1" fill="#f0f0f0" shape-rendering="crispEdges"/><rect x="1000" y="182" width="4" height="1" fill="#f0f0f0" shape-rendering="crispEdges"/><rect x="1001.5" y="188" width="2.5" height="1" fill="#f0f0f0" shape-rendering="crispEdges"/><rect x="1001.5" y="194" width="2.5" height="1" fill="#f0f0f0" shape-rendering="crispEdges"/><rect x="1001.5" y="199" width="2.5" height="1" fill="#f0f0f0" shape-rendering="crispEdges"/><rect x="1001.5" y="205" width="2.5" height="1" fill="#f0f0f0" shape-rendering="crispEdges"/><rect x="1000" y="210" width="4" height="1" fill="#f0f0f0" shape-rendering="crispEdges"/><rect x="1001.5" y="216" width="2.5" height="1" fill="#f0f0f0" shape-rendering="crispEdges"/><rect x="1001.5" y="222" width="2.5" height="1" fill="#f0f0f0" shape-rendering="crispEdges"/><rect x="1001.5" y="227" width="2.5" height="1" fill="#f0f0f0" shape-rendering="crispEdges"/><rect x="1001.5" y="233" width="2.5" height="1" fill="#f0f0f0" shape-rendering="crispEdges"/><rect x="1000" y="238" width="4" height="1" fill="#f0f0f0" shape-rendering="crispEdges"/><rect x="1001.5" y="244" width="2.5" height="1" fill="#f0f0f0" shape-rendering="crispEdges"/><rect x="1001.5" y="250" width="2.5" height="1" fill="#f0f0f0" shape-rendering="crispEdges"/><rect x="1001.5" y="255" width="2.5" height="1" fill="#f0f0f0" shape-rendering="crispEdges"/><rect x="1001.5" y="261" width="2.5" height="1" fill="#f0f0f0" shape-rendering="crispEdges"/><rect x="1000" y="266" width="4" height="1" fill="#f0f0f0" shape-rendering="crispEdges"/><rect x="1001.5" y="272" width="2.5" height="1" fill="#f0f0f0" shape-rendering="crispEdges"/><rect x="1001.5" y="278" width="2.5" height="1" fill="#f0f0f0" shape-rendering="crispEdges"/><rect x="1001.5" y="283" width="2.5" height="1" fill="#f0f0f0" shape-rendering="crispEdges"/><rect x="1001.5" y="289" width="2.5" height="1" fill="#f0f0f0" shape-rendering="crispEdges"/><rect x="1000" y="294" width="4" height="1" fill="#f0f0f0" shape-rendering="crispEdges"/><rect x="1001.5" y="300" width="2.5" height="1" fill="#f0f0f0" shape-rendering="crispEdges"/><rect x="1001.5" y="306" width="2.5" height="1" fill="#f0f0f0" shape-rendering="crispEdges"/><rect x="1001.5" y="311" width="2.5" height="1" fill="#f0f0f0" shape-rendering="crispEdges"/><rect x="1001.5" y="317" width="2.5" height="1" fill="#f0f0f0" shape-rendering="crispEdges"/><rect x="1000" y="322" width="4" height="1" fill="#f0f0f0" shape-rendering="crispEdges"/><rect x="1001.5" y="328" width="2.5" height="1" fill="#f0f0f0" shape-rendering="crispEdges"/><rect x="1001.5" y="334" width="2.5" height="1" fill="#f0f0f0" shape-rendering="crispEdges"/><rect x="1001.5" y="339" width="2.5" height="1" fill="#f0f0f0" shape-rendering="crispEdges"/><rect x="1001.5" y="345" width="2.5" height="1" fill="#f0f0f0" shape-rendering="crispEdges"/><text x="1014.50" y="102.60" font-size="12" fill="#e6dc78" font-family="Liberation Sans" textLength="38.00" lengthAdjust="spacingAndGlyphs" >6390,00</text><text x="1014.50" y="130.60" font-size="12" fill="#e6dc78" font-family="Liberation Sans" textLength="38.00" lengthAdjust="spacingAndGlyphs" >6380,00</text><text x="1014.50" y="158.60" font-size="12" fill="#e6dc78" font-family="Liberation Sans" textLength="38.00" lengthAdjust="spacingAndGlyphs" >6370,00</text><text x="1014.50" y="186.60" font-size="12" fill="#e6dc78" font-family="Liberation Sans" textLength="38.00" lengthAdjust="spacingAndGlyphs" >6360,00</text><text x="1014.50" y="214.60" font-size="12" fill="#e6dc78" font-family="Liberation Sans" textLength="38.00" lengthAdjust="spacingAndGlyphs" >6350,00</text><text x="1014.50" y="242.60" font-size="12" fill="#e6dc78" font-family="Liberation Sans" textLength="38.00" lengthAdjust="spacingAndGlyphs" >6340,00</text><text x="1014.50" y="270.60" font-size="12" fill="#e6dc78" font-family="Liberation Sans" textLength="38.00" lengthAdjust="spacingAndGlyphs" >6330,00</text><text x="1014.50" y="298.60" font-size="12" fill="#e6dc78" font-family="Liberation Sans" textLength="38.00" lengthAdjust="spacingAndGlyphs" >6320,00</text><text x="1014.50" y="326.60" font-size="12" fill="#e6dc78" font-family="Liberation Sans" textLength="38.00" lengthAdjust="spacingAndGlyphs" >6310,00</text><rect x="1005" y="195.3" width="41" height="12.4" fill="#00ffff"/><text x="1006.50" y="205.50" font-size="12" fill="#000" font-family="Liberation Sans" textLength="38.50" lengthAdjust="spacingAndGlyphs" >6353,70</text><rect x="1005" y="277" width="41" height="3" fill="#808080"/><rect x="1005" y="279.5" width="45" height="1.2" fill="#ffff00"/><rect x="1005" y="264.4" width="41" height="12.6" fill="#80ffc0"/><text x="1006.50" y="275.00" font-size="12" fill="#000" font-family="Liberation Sans" textLength="38.50" lengthAdjust="spacingAndGlyphs" >6328,84</text><g clip-path="url(#c3p2)"><rect x="425" y="365" width="575" height="8.7" fill="#004a00"/><rect x="425" y="401.8" width="575" height="9.4" fill="#4a0000"/><line x1="476.5" y1="363" x2="476.5" y2="413" stroke="#5a5a5a" stroke-width="1" stroke-dasharray="1,1" shape-rendering="crispEdges"/><line x1="515.5" y1="363" x2="515.5" y2="413" stroke="#5a5a5a" stroke-width="1" stroke-dasharray="1,1" shape-rendering="crispEdges"/><line x1="554.5" y1="363" x2="554.5" y2="413" stroke="#5a5a5a" stroke-width="1" stroke-dasharray="1,1" shape-rendering="crispEdges"/><line x1="619.5" y1="363" x2="619.5" y2="413" stroke="#5a5a5a" stroke-width="1" stroke-dasharray="1,1" shape-rendering="crispEdges"/><line x1="658.5" y1="363" x2="658.5" y2="413" stroke="#5a5a5a" stroke-width="1" stroke-dasharray="1,1" shape-rendering="crispEdges"/><line x1="697.5" y1="363" x2="697.5" y2="413" stroke="#5a5a5a" stroke-width="1" stroke-dasharray="1,1" shape-rendering="crispEdges"/><line x1="736.5" y1="363" x2="736.5" y2="413" stroke="#5a5a5a" stroke-width="1" stroke-dasharray="1,1" shape-rendering="crispEdges"/><line x1="775.5" y1="363" x2="775.5" y2="413" stroke="#5a5a5a" stroke-width="1" stroke-dasharray="1,1" shape-rendering="crispEdges"/><line x1="814.5" y1="363" x2="814.5" y2="413" stroke="#5a5a5a" stroke-width="1" stroke-dasharray="1,1" shape-rendering="crispEdges"/><line x1="853.5" y1="363" x2="853.5" y2="413" stroke="#5a5a5a" stroke-width="1" stroke-dasharray="1,1" shape-rendering="crispEdges"/><line x1="892.5" y1="363" x2="892.5" y2="413" stroke="#5a5a5a" stroke-width="1" stroke-dasharray="1,1" shape-rendering="crispEdges"/><line x1="931.5" y1="363" x2="931.5" y2="413" stroke="#5a5a5a" stroke-width="1" stroke-dasharray="1,1" shape-rendering="crispEdges"/><line x1="970.5" y1="363" x2="970.5" y2="413" stroke="#5a5a5a" stroke-width="1" stroke-dasharray="1,1" shape-rendering="crispEdges"/><line x1="425" y1="365.5" x2="1000" y2="365.5" stroke="#6a6a6a" stroke-width="1" stroke-dasharray="1,1" shape-rendering="crispEdges"/><line x1="425" y1="411.5" x2="1000" y2="411.5" stroke="#6a6a6a" stroke-width="1" stroke-dasharray="1,1" shape-rendering="crispEdges"/><line x1="425" y1="388.5" x2="1000" y2="388.5" stroke="#707070" stroke-width="1" stroke-dasharray="3,12" shape-rendering="crispEdges"/><polyline points="556.0,387.9 579.3,369.6 592.4,381.2 604.9,385.8 618.4,397.2 631.0,399.3 647.6,406.6 658.0,410.4 672.6,410.4 685.0,407.0 705.9,400.4 735.0,381.6 749.6,375.4 761.0,372.3 780.0,390.0 800.1,404.2 828.0,403.6 863.7,382.4 903.8,372.3 912.8,373.0 944.0,379.0 957.4,388.0 981.9,407.0 995.3,403.6" fill="none" stroke="#ffa010" stroke-width="1.1"/><path d="M556.0 396.2 C559.8 393.6 572.8 383.7 578.9 380.6 C585.0 377.5 587.9 377.7 592.4 377.5 C596.9 377.3 601.7 377.9 606.0 379.6 C610.3 381.3 611.5 384.1 618.4 387.9 C625.3 391.7 639.3 399.0 647.6 402.4 C655.9 405.8 662.2 407.2 668.4 408.3 C674.6 409.4 678.1 409.5 685.0 408.7 C691.9 407.9 701.3 406.8 710.0 403.5 C718.7 400.2 728.3 393.4 737.0 388.9 C745.7 384.4 755.7 378.3 762.0 376.4 C768.3 374.5 771.6 377.2 774.6 377.5 C777.6 377.8 778.2 377.0 780.0 378.0 C781.8 379.0 781.9 380.4 785.6 383.5 C789.3 386.6 796.0 393.4 802.3 396.9 C808.6 400.3 812.1 405.1 823.5 404.2 C834.9 403.3 855.1 396.4 870.4 391.3 C885.6 386.2 904.2 376.3 915.0 373.5 C925.8 370.7 929.4 373.6 935.0 374.6 C940.6 375.6 940.7 375.6 948.5 379.7 C956.3 383.8 974.1 395.1 981.9 399.1 C989.7 403.1 993.1 402.9 995.3 403.6" fill="none" stroke="#10e8f0" stroke-width="1.1"/></g><g clip-path="url(#c3p3)"><rect x="425" y="432" width="575" height="5" fill="#004a00"/><rect x="425" y="452" width="575" height="5" fill="#4a0000"/><line x1="476.5" y1="430" x2="476.5" y2="461" stroke="#5a5a5a" stroke-width="1" stroke-dasharray="1,1" shape-rendering="crispEdges"/><line x1="515.5" y1="430" x2="515.5" y2="461" stroke="#5a5a5a" stroke-width="1" stroke-dasharray="1,1" shape-rendering="crispEdges"/><line x1="554.5" y1="430" x2="554.5" y2="461" stroke="#5a5a5a" stroke-width="1" stroke-dasharray="1,1" shape-rendering="crispEdges"/><line x1="619.5" y1="430" x2="619.5" y2="461" stroke="#5a5a5a" stroke-width="1" stroke-dasharray="1,1" shape-rendering="crispEdges"/><line x1="658.5" y1="430" x2="658.5" y2="461" stroke="#5a5a5a" stroke-width="1" stroke-dasharray="1,1" shape-rendering="crispEdges"/><line x1="697.5" y1="430" x2="697.5" y2="461" stroke="#5a5a5a" stroke-width="1" stroke-dasharray="1,1" shape-rendering="crispEdges"/><line x1="736.5" y1="430" x2="736.5" y2="461" stroke="#5a5a5a" stroke-width="1" stroke-dasharray="1,1" shape-rendering="crispEdges"/><line x1="775.5" y1="430" x2="775.5" y2="461" stroke="#5a5a5a" stroke-width="1" stroke-dasharray="1,1" shape-rendering="crispEdges"/><line x1="814.5" y1="430" x2="814.5" y2="461" stroke="#5a5a5a" stroke-width="1" stroke-dasharray="1,1" shape-rendering="crispEdges"/><line x1="853.5" y1="430" x2="853.5" y2="461" stroke="#5a5a5a" stroke-width="1" stroke-dasharray="1,1" shape-rendering="crispEdges"/><line x1="892.5" y1="430" x2="892.5" y2="461" stroke="#5a5a5a" stroke-width="1" stroke-dasharray="1,1" shape-rendering="crispEdges"/><line x1="931.5" y1="430" x2="931.5" y2="461" stroke="#5a5a5a" stroke-width="1" stroke-dasharray="1,1" shape-rendering="crispEdges"/><line x1="970.5" y1="430" x2="970.5" y2="461" stroke="#5a5a5a" stroke-width="1" stroke-dasharray="1,1" shape-rendering="crispEdges"/><line x1="425" y1="432.5" x2="1000" y2="432.5" stroke="#6a6a6a" stroke-width="1" stroke-dasharray="1,1" shape-rendering="crispEdges"/><line x1="425" y1="457.5" x2="1000" y2="457.5" stroke="#6a6a6a" stroke-width="1" stroke-dasharray="1,1" shape-rendering="crispEdges"/><path d="M556.0 453.4 C560.2 452.2 570.6 446.4 581.0 446.2 C591.4 446.0 608.4 450.7 618.4 452.4 C628.4 454.1 631.6 455.6 641.3 456.2 C651.0 456.8 666.6 457.2 676.7 456.2 C686.8 455.2 691.7 452.7 701.7 450.3 C711.8 447.9 727.1 444.2 737.0 442.0 C746.9 439.8 755.5 437.4 761.0 436.8 C766.5 436.2 759.2 435.4 770.0 438.1 C780.8 440.9 803.5 453.7 825.8 453.3 C848.1 452.9 887.1 439.2 903.8 435.9 C920.5 432.5 918.5 433.6 926.0 433.2 C933.5 432.8 939.5 433.2 948.5 433.7 C957.5 434.2 971.9 435.9 979.7 436.4 C987.5 436.8 992.7 436.4 995.3 436.4" fill="none" stroke="#10e8f0" stroke-width="1.1"/></g><g clip-path="url(#c3p4)"><line x1="476.5" y1="476" x2="476.5" y2="523" stroke="#5a5a5a" stroke-width="1" stroke-dasharray="1,1" shape-rendering="crispEdges"/><line x1="515.5" y1="476" x2="515.5" y2="523" stroke="#5a5a5a" stroke-width="1" stroke-dasharray="1,1" shape-rendering="crispEdges"/><line x1="554.5" y1="476" x2="554.5" y2="523" stroke="#5a5a5a" stroke-width="1" stroke-dasharray="1,1" shape-rendering="crispEdges"/><line x1="619.5" y1="476" x2="619.5" y2="523" stroke="#5a5a5a" stroke-width="1" stroke-dasharray="1,1" shape-rendering="crispEdges"/><line x1="658.5" y1="476" x2="658.5" y2="523" stroke="#5a5a5a" stroke-width="1" stroke-dasharray="1,1" shape-rendering="crispEdges"/><line x1="697.5" y1="476" x2="697.5" y2="523" stroke="#5a5a5a" stroke-width="1" stroke-dasharray="1,1" shape-rendering="crispEdges"/><line x1="736.5" y1="476" x2="736.5" y2="523" stroke="#5a5a5a" stroke-width="1" stroke-dasharray="1,1" shape-rendering="crispEdges"/><line x1="775.5" y1="476" x2="775.5" y2="523" stroke="#5a5a5a" stroke-width="1" stroke-dasharray="1,1" shape-rendering="crispEdges"/><line x1="814.5" y1="476" x2="814.5" y2="523" stroke="#5a5a5a" stroke-width="1" stroke-dasharray="1,1" shape-rendering="crispEdges"/><line x1="853.5" y1="476" x2="853.5" y2="523" stroke="#5a5a5a" stroke-width="1" stroke-dasharray="1,1" shape-rendering="crispEdges"/><line x1="892.5" y1="476" x2="892.5" y2="523" stroke="#5a5a5a" stroke-width="1" stroke-dasharray="1,1" shape-rendering="crispEdges"/><line x1="931.5" y1="476" x2="931.5" y2="523" stroke="#5a5a5a" stroke-width="1" stroke-dasharray="1,1" shape-rendering="crispEdges"/><line x1="970.5" y1="476" x2="970.5" y2="523" stroke="#5a5a5a" stroke-width="1" stroke-dasharray="1,1" shape-rendering="crispEdges"/><line x1="425" y1="485.5" x2="1000" y2="485.5" stroke="#5a5a5a" stroke-width="1" stroke-dasharray="1,1" shape-rendering="crispEdges"/><line x1="425" y1="510.5" x2="1000" y2="510.5" stroke="#5a5a5a" stroke-width="1" stroke-dasharray="1,1" shape-rendering="crispEdges"/><rect x="638" y="485.3" width="12" height="1.2" fill="#800000"/><rect x="650.7" y="485.3" width="12" height="5.5" fill="#800000"/><rect x="663.8" y="485.3" width="12" height="9.7" fill="#800000"/><rect x="677.1" y="485.3" width="12" height="11.7" fill="#800000"/><rect x="690.3" y="485.3" width="12" height="10.5" fill="#800000"/><rect x="703.3" y="485.3" width="12" height="8.4" fill="#800000"/><rect x="716.3" y="485.3" width="12" height="7.9" fill="#800000"/><rect x="729.3" y="485.3" width="12" height="7.0" fill="#800000"/><rect x="742.3" y="485.3" width="12" height="4.7" fill="#800000"/><rect x="755.3" y="485.3" width="12" height="2.2" fill="#800000"/><rect x="768.3" y="485.3" width="12" height="2.6" fill="#800000"/><rect x="781" y="485.3" width="12" height="3.7" fill="#800000"/><rect x="794" y="485.3" width="12" height="3.7" fill="#800000"/><rect x="807" y="485.3" width="12" height="4.4" fill="#800000"/><rect x="820" y="485.3" width="12" height="4.4" fill="#800000"/><rect x="833" y="485.3" width="12" height="2.6" fill="#800000"/><rect x="846" y="485.3" width="12" height="0.8" fill="#800000"/><rect x="872" y="484.1" width="12" height="1.2" fill="#008a00"/><rect x="885" y="481.9" width="12" height="3.4" fill="#008a00"/><rect x="898" y="480" width="12" height="5.3" fill="#008a00"/><rect x="911" y="479" width="12" height="6.3" fill="#008a00"/><rect x="924" y="477.8" width="12" height="7.5" fill="#008a00"/><rect x="937" y="477.8" width="12" height="7.5" fill="#008a00"/><rect x="950" y="479" width="12" height="6.3" fill="#008a00"/><rect x="963" y="480" width="12" height="5.3" fill="#008a00"/><rect x="976" y="481.2" width="12" height="4.1" fill="#008a00"/><rect x="989" y="481.2" width="12" height="4.1" fill="#008a00"/><polyline points="556.0,493.3 637.2,492.3 649.7,493.7 680.9,498.5 733.0,508.3 770.0,511.8 792.3,512.4 825.8,515.3 870.4,515.3 903.8,512.4 944.0,507.3 995.3,501.9" fill="none" stroke="#ffa010" stroke-width="1.1"/><path d="M556.0 494.3 C558.8 494.0 563.3 492.6 572.7 492.3 C582.1 492.0 600.1 492.1 612.2 492.3 C624.3 492.5 633.7 490.5 645.5 493.7 C657.3 496.9 670.5 508.0 683.0 511.6 C695.5 515.2 708.6 514.9 720.4 515.2 C732.2 515.6 746.9 514.3 753.8 513.7 C760.7 513.1 757.1 511.4 762.0 511.6 C766.9 511.8 776.1 513.8 783.4 514.7 C790.7 515.6 799.4 516.2 805.7 516.9 C812.0 517.6 816.1 518.9 821.3 519.1 C826.5 519.4 829.8 519.0 836.9 518.4 C844.0 517.8 854.8 516.4 863.7 515.3 C872.6 514.2 882.3 513.3 890.5 511.8 C898.7 510.3 904.6 508.1 912.8 506.4 C921.0 504.6 930.6 502.4 939.5 501.3 C948.4 500.2 957.0 500.2 966.3 499.7 C975.6 499.2 990.5 498.6 995.3 498.4" fill="none" stroke="#10e8f0" stroke-width="1.1"/></g><g clip-path="url(#c3p5)"><line x1="476.5" y1="537" x2="476.5" y2="584" stroke="#5a5a5a" stroke-width="1" stroke-dasharray="1,1" shape-rendering="crispEdges"/><line x1="515.5" y1="537" x2="515.5" y2="584" stroke="#5a5a5a" stroke-width="1" stroke-dasharray="1,1" shape-rendering="crispEdges"/><line x1="554.5" y1="537" x2="554.5" y2="584" stroke="#5a5a5a" stroke-width="1" stroke-dasharray="1,1" shape-rendering="crispEdges"/><line x1="619.5" y1="537" x2="619.5" y2="584" stroke="#5a5a5a" stroke-width="1" stroke-dasharray="1,1" shape-rendering="crispEdges"/><line x1="658.5" y1="537" x2="658.5" y2="584" stroke="#5a5a5a" stroke-width="1" stroke-dasharray="1,1" shape-rendering="crispEdges"/><line x1="697.5" y1="537" x2="697.5" y2="584" stroke="#5a5a5a" stroke-width="1" stroke-dasharray="1,1" shape-rendering="crispEdges"/><line x1="736.5" y1="537" x2="736.5" y2="584" stroke="#5a5a5a" stroke-width="1" stroke-dasharray="1,1" shape-rendering="crispEdges"/><line x1="775.5" y1="537" x2="775.5" y2="584" stroke="#5a5a5a" stroke-width="1" stroke-dasharray="1,1" shape-rendering="crispEdges"/><line x1="814.5" y1="537" x2="814.5" y2="584" stroke="#5a5a5a" stroke-width="1" stroke-dasharray="1,1" shape-rendering="crispEdges"/><line x1="853.5" y1="537" x2="853.5" y2="584" stroke="#5a5a5a" stroke-width="1" stroke-dasharray="1,1" shape-rendering="crispEdges"/><line x1="892.5" y1="537" x2="892.5" y2="584" stroke="#5a5a5a" stroke-width="1" stroke-dasharray="1,1" shape-rendering="crispEdges"/><line x1="931.5" y1="537" x2="931.5" y2="584" stroke="#5a5a5a" stroke-width="1" stroke-dasharray="1,1" shape-rendering="crispEdges"/><line x1="970.5" y1="537" x2="970.5" y2="584" stroke="#5a5a5a" stroke-width="1" stroke-dasharray="1,1" shape-rendering="crispEdges"/><line x1="425" y1="543.5" x2="1000" y2="543.5" stroke="#5a5a5a" stroke-width="1" stroke-dasharray="1,1" shape-rendering="crispEdges"/><line x1="425" y1="575.5" x2="1000" y2="575.5" stroke="#5a5a5a" stroke-width="1" stroke-dasharray="1,1" shape-rendering="crispEdges"/><line x1="425" y1="559.5" x2="1000" y2="559.5" stroke="#707070" stroke-width="1" stroke-dasharray="3,12" shape-rendering="crispEdges"/><path d="M556.0 551.6 C565.4 551.6 599.9 551.7 612.2 551.6 C624.5 551.5 624.5 551.0 630.0 550.8 C635.5 550.6 636.7 547.8 645.5 550.5 C654.3 553.2 667.8 563.0 683.0 567.2 C698.2 571.4 719.2 573.1 737.0 575.5 C754.8 577.9 775.6 581.0 790.0 581.6 C804.4 582.2 812.7 581.3 823.5 579.3 C834.3 577.2 841.4 573.0 854.8 569.3 C868.2 565.6 886.3 561.3 903.8 557.0 C921.3 552.7 944.4 546.4 959.6 543.6 C974.9 540.8 989.3 540.8 995.3 540.3" fill="none" stroke="#10e8f0" stroke-width="1.1"/></g><rect x="1000" y="366" width="4" height="1" fill="#f0f0f0" shape-rendering="crispEdges"/><rect x="1001.5" y="370" width="2.5" height="1" fill="#f0f0f0" shape-rendering="crispEdges"/><rect x="1001.5" y="375" width="2.5" height="1" fill="#f0f0f0" shape-rendering="crispEdges"/><rect x="1001.5" y="379" width="2.5" height="1" fill="#f0f0f0" shape-rendering="crispEdges"/><rect x="1001.5" y="384" width="2.5" height="1" fill="#f0f0f0" shape-rendering="crispEdges"/><rect x="1000" y="388" width="4" height="1" fill="#f0f0f0" shape-rendering="crispEdges"/><rect x="1001.5" y="393" width="2.5" height="1" fill="#f0f0f0" shape-rendering="crispEdges"/><rect x="1001.5" y="398" width="2.5" height="1" fill="#f0f0f0" shape-rendering="crispEdges"/><rect x="1001.5" y="402" width="2.5" height="1" fill="#f0f0f0" shape-rendering="crispEdges"/><rect x="1001.5" y="407" width="2.5" height="1" fill="#f0f0f0" shape-rendering="crispEdges"/><rect x="1000" y="411" width="4" height="1" fill="#f0f0f0" shape-rendering="crispEdges"/><rect x="1000" y="432" width="4" height="1" fill="#f0f0f0" shape-rendering="crispEdges"/><rect x="1001.5" y="437" width="2.5" height="1" fill="#f0f0f0" shape-rendering="crispEdges"/><rect x="1001.5" y="442" width="2.5" height="1" fill="#f0f0f0" shape-rendering="crispEdges"/><rect x="1001.5" y="447" width="2.5" height="1" fill="#f0f0f0" shape-rendering="crispEdges"/><rect x="1001.5" y="452" width="2.5" height="1" fill="#f0f0f0" shape-rendering="crispEdges"/><rect x="1000" y="457" width="4" height="1" fill="#f0f0f0" shape-rendering="crispEdges"/><rect x="1001.5" y="480" width="2.5" height="1" fill="#f0f0f0" shape-rendering="crispEdges"/><rect x="1000" y="485" width="4" height="1" fill="#f0f0f0" shape-rendering="crispEdges"/><rect x="1001.5" y="490" width="2.5" height="1" fill="#f0f0f0" shape-rendering="crispEdges"/><rect x="1001.5" y="495" width="2.5" height="1" fill="#f0f0f0" shape-rendering="crispEdges"/><rect x="1001.5" y="500" width="2.5" height="1" fill="#f0f0f0" shape-rendering="crispEdges"/><rect x="1001.5" y="505" width="2.5" height="1" fill="#f0f0f0" shape-rendering="crispEdges"/><rect x="1000" y="510" width="4" height="1" fill="#f0f0f0" shape-rendering="crispEdges"/><rect x="1001.5" y="516" width="2.5" height="1" fill="#f0f0f0" shape-rendering="crispEdges"/><rect x="1001.5" y="521" width="2.5" height="1" fill="#f0f0f0" shape-rendering="crispEdges"/><rect x="1001.5" y="540" width="2.5" height="1" fill="#f0f0f0" shape-rendering="crispEdges"/><rect x="1000" y="544" width="4" height="1" fill="#f0f0f0" shape-rendering="crispEdges"/><rect x="1001.5" y="547" width="2.5" height="1" fill="#f0f0f0" shape-rendering="crispEdges"/><rect x="1001.5" y="550" width="2.5" height="1" fill="#f0f0f0" shape-rendering="crispEdges"/><rect x="1001.5" y="553" width="2.5" height="1" fill="#f0f0f0" shape-rendering="crispEdges"/><rect x="1001.5" y="556" width="2.5" height="1" fill="#f0f0f0" shape-rendering="crispEdges"/><rect x="1000" y="559" width="4" height="1" fill="#f0f0f0" shape-rendering="crispEdges"/><rect x="1001.5" y="563" width="2.5" height="1" fill="#f0f0f0" shape-rendering="crispEdges"/><rect x="1001.5" y="566" width="2.5" height="1" fill="#f0f0f0" shape-rendering="crispEdges"/><rect x="1001.5" y="569" width="2.5" height="1" fill="#f0f0f0" shape-rendering="crispEdges"/><rect x="1001.5" y="572" width="2.5" height="1" fill="#f0f0f0" shape-rendering="crispEdges"/><rect x="1000" y="575" width="4" height="1" fill="#f0f0f0" shape-rendering="crispEdges"/><rect x="1001.5" y="578" width="2.5" height="1" fill="#f0f0f0" shape-rendering="crispEdges"/><rect x="1001.5" y="582" width="2.5" height="1" fill="#f0f0f0" shape-rendering="crispEdges"/><text x="1008.21" y="374.00" font-size="12" fill="#e6dc78" font-family="Liberation Sans" textLength="43.79" lengthAdjust="spacingAndGlyphs" >100,0000</text><rect x="1005" y="398" width="40.5" height="11.6" fill="#00ffff"/><text x="1007.00" y="408.00" font-size="12" fill="#000" font-family="Liberation Sans" textLength="37.95" lengthAdjust="spacingAndGlyphs" >18,3238</text><text x="1046.66" y="412.00" font-size="12" fill="#e6dc78" font-family="Liberation Sans" textLength="5.84" lengthAdjust="spacingAndGlyphs" >0</text><rect x="1005" y="431.8" width="40.5" height="10.5" fill="#00ffff"/><text x="1007.00" y="441.50" font-size="12" fill="#000" font-family="Liberation Sans" textLength="37.95" lengthAdjust="spacingAndGlyphs" >82,6456</text><text x="1046.66" y="441.50" font-size="12" fill="#e6dc78" font-family="Liberation Sans" textLength="5.84" lengthAdjust="spacingAndGlyphs" >0</text><text x="1046.66" y="458.00" font-size="12" fill="#e6dc78" font-family="Liberation Sans" textLength="5.84" lengthAdjust="spacingAndGlyphs" >0</text><text x="1046.66" y="489.50" font-size="12" fill="#e6dc78" font-family="Liberation Sans" textLength="5.84" lengthAdjust="spacingAndGlyphs" >0</text><text x="1010.55" y="514.50" font-size="12" fill="#e6dc78" font-family="Liberation Sans" textLength="41.45" lengthAdjust="spacingAndGlyphs" >-10,0000</text><rect x="1005" y="491.5" width="40" height="7" fill="#00ffff"/><text x="1008.00" y="501.00" font-size="12" fill="#000" font-family="Liberation Sans" textLength="33.00" lengthAdjust="spacingAndGlyphs" >5,1130</text><rect x="1003" y="497.6" width="43" height="10.6" fill="#ff9c10"/><text x="1005.00" y="507.50" font-size="12" fill="#000" font-family="Liberation Sans" textLength="34.83" lengthAdjust="spacingAndGlyphs" >-6,7112</text><rect x="1005" y="538.8" width="38" height="11.6" fill="#00ffff"/><text x="1007.00" y="549.00" font-size="12" fill="#000" font-family="Liberation Sans" textLength="32.11" lengthAdjust="spacingAndGlyphs" >0,1245</text><text x="1046.66" y="549.00" font-size="12" fill="#e6dc78" font-family="Liberation Sans" textLength="5.84" lengthAdjust="spacingAndGlyphs" >0</text><text x="1016.39" y="580.50" font-size="12" fill="#e6dc78" font-family="Liberation Sans" textLength="35.61" lengthAdjust="spacingAndGlyphs" >-1,0000</text><rect x="425" y="585" width="579" height="1" fill="#e8e8e8"/><rect x="425" y="586.5" width="579" height="1.2" fill="#f0e040"/><rect x="1004" y="585" width="52" height="20" fill="#f0f0f0"/><rect x="475.9" y="585" width="1.5" height="3" fill="#f0e040"/><rect x="514.8" y="585" width="1.5" height="3" fill="#f0e040"/><rect x="553.8" y="585" width="1.5" height="3" fill="#f0e040"/><rect x="619.1" y="585" width="1.5" height="3" fill="#f0e040"/><rect x="658.0" y="585" width="1.5" height="3" fill="#f0e040"/><rect x="697.0" y="585" width="1.5" height="3" fill="#f0e040"/><rect x="736.0" y="585" width="1.5" height="3" fill="#f0e040"/><rect x="775.0" y="585" width="1.5" height="3" fill="#f0e040"/><rect x="814.0" y="585" width="1.5" height="3" fill="#f0e040"/><rect x="853.0" y="585" width="1.5" height="3" fill="#f0e040"/><rect x="892.0" y="585" width="1.5" height="3" fill="#f0e040"/><rect x="931.0" y="585" width="1.5" height="3" fill="#f0e040"/><rect x="970.0" y="585" width="1.5" height="3" fill="#f0e040"/><text x="556.45" y="600.30" font-size="12.8" fill="#e6dc78" font-family="Liberation Sans" textLength="13.10" lengthAdjust="spacingAndGlyphs" >35</text><text x="604.87" y="600.30" font-size="12.8" fill="#e6dc78" font-family="Liberation Sans" textLength="29.47" lengthAdjust="spacingAndGlyphs" >15:00</text><text x="643.77" y="600.30" font-size="12.8" fill="#e6dc78" font-family="Liberation Sans" textLength="29.47" lengthAdjust="spacingAndGlyphs" >15:15</text><text x="682.77" y="600.30" font-size="12.8" fill="#e6dc78" font-family="Liberation Sans" textLength="29.47" lengthAdjust="spacingAndGlyphs" >15:30</text><text x="721.77" y="600.30" font-size="12.8" fill="#e6dc78" font-family="Liberation Sans" textLength="29.47" lengthAdjust="spacingAndGlyphs" >15:45</text><text x="760.77" y="600.30" font-size="12.8" fill="#e6dc78" font-family="Liberation Sans" textLength="29.47" lengthAdjust="spacingAndGlyphs" >16:00</text><text x="799.77" y="600.30" font-size="12.8" fill="#e6dc78" font-family="Liberation Sans" textLength="29.47" lengthAdjust="spacingAndGlyphs" >16:15</text><text x="838.77" y="600.30" font-size="12.8" fill="#e6dc78" font-family="Liberation Sans" textLength="29.47" lengthAdjust="spacingAndGlyphs" >16:30</text><text x="877.77" y="600.30" font-size="12.8" fill="#e6dc78" font-family="Liberation Sans" textLength="29.47" lengthAdjust="spacingAndGlyphs" >16:45</text><text x="916.77" y="600.30" font-size="12.8" fill="#e6dc78" font-family="Liberation Sans" textLength="29.47" lengthAdjust="spacingAndGlyphs" >17:00</text><text x="955.77" y="600.30" font-size="12.8" fill="#e6dc78" font-family="Liberation Sans" textLength="29.47" lengthAdjust="spacingAndGlyphs" >17:15</text><path d="M1022 600.5 L1034.5 588.5" stroke="#111" stroke-width="1.3"/><path d="M1030.8 592.2 Q1032.5 589.8 1034.8 590.6 Q1036.5 592.6 1035.8 594.6 Q1038.5 594.2 1038.8 596.2 Q1037.6 599 1034.8 598.6 Q1033.8 596.6 1032.4 595.6 Q1031 594.6 1030.8 592.2Z" fill="#0a1ee8" stroke="#000050" stroke-width="1"/><rect x="425" y="605" width="631" height="17" fill="#eaeaea"/><rect x="1004.5" y="606.5" width="33" height="14" rx="2" fill="url(#thumbg)" stroke="#8a8a8a"/><defs><linearGradient id="thumbg" x1="0" y1="0" x2="0" y2="1"><stop offset="0" stop-color="#f6f6f6"/><stop offset="0.5" stop-color="#e6e6e6"/><stop offset="1" stop-color="#cfcfcf"/></linearGradient></defs><path d="M1017 610v7M1020 610v7M1023 610v7" stroke="#555" stroke-width="1.2"/><path d="M1047 609 L1051 613 L1047 617Z" fill="#404040"/><path d="M569 609 L565 613 L569 617Z" fill="#404040"/></svg><div class="a" style="left:-20px;top:140px;width:577px;height:489px;border:1px solid #4e5156;border-radius:7px 7px 0 0;background:#d6e2ef;overflow:hidden"><div class="a" style="left:0;top:0;width:100%;height:1px;background:#f4f7fb"></div><div class="a" style="left:0;top:1px;width:100%;height:29px;background:linear-gradient(#bfcddd,#cbd8e6 50%,#d6e1ed)"></div><div class="a" style="left:0;top:30px;width:100%;height:459px;background:#d8e4f1"></div></div><svg width="1076" height="682"><text x="321.70" y="162.80" font-size="12.4" fill="#36404e" font-family="Liberation Sans" textLength="118.50" lengthAdjust="spacingAndGlyphs" >12.04.2012 - 30.05.2012</text></svg><div class="btn" style="left:450px;top:150px;width:30px;height:16px;background:linear-gradient(#dce6f1,#c9d6e5);border-color:#7f8fa8"></div><div class="btn" style="left:483px;top:150px;width:30px;height:16px;background:linear-gradient(#dce6f1,#c9d6e5);border-color:#7f8fa8"></div><div class="btn" style="left:516px;top:150px;width:30px;height:16px;background:linear-gradient(#dce6f1,#c9d6e5);border-color:#7f8fa8"></div><svg width="1076" height="682"><rect x="459.5" y="159.5" width="11" height="3.5" rx="1" fill="#f4f4f4" stroke="#404040" stroke-width="1.2"/><rect x="493.0" y="154.5" width="10.5" height="7.5" rx="1" fill="#f4f4f4" stroke="#404040" stroke-width="1.5"/><rect x="496.0" y="157.2" width="4.5" height="2" fill="#505050"/><path d="M526.3 154.4 L536.2 162.1 M536.2 154.4 L526.3 162.1" stroke="#505050" stroke-width="4.4"/><path d="M527.0 155.0 L535.5 161.5 M535.5 155.0 L527.0 161.5" stroke="#f8f8f8" stroke-width="2.5"/></svg><svg width="1076" height="682"><defs><clipPath id="lwmain"><rect x="0" y="187" width="497" height="394"/></clipPath></defs><rect x="0" y="172" width="547" height="430" fill="#00003a"/><rect x="0" y="170" width="547" height="1" fill="#8c8c8c" shape-rendering="crispEdges"/><rect x="0" y="171" width="547" height="1" fill="#2a2a2a" shape-rendering="crispEdges"/><rect x="531" y="173" width="15" height="5" fill="#e8e8e8"/><rect x="531" y="177" width="15" height="1" fill="#9a9a9a"/><rect x="0" y="187" width="501" height="394" fill="#000"/><g shape-rendering="crispEdges"><rect x="501" y="187" width="46" height="395" fill="#00003a"/><rect x="545" y="187" width="1" height="395" fill="#1848ff"/><rect x="501" y="581" width="45" height="1" fill="#1848ff"/><rect x="501" y="187" width="1" height="394" fill="#f8c830"/><rect x="501" y="187" width="44" height="1" fill="#f8c830"/></g><g clip-path="url(#lwmain)"><polygon points="0.0,268.0 26.4,282.0 49.2,289.0 70.3,297.8 95.0,324.2 112.6,340.0 133.7,341.8 160.0,339.4 175.8,336.7 197.0,336.7 218.0,340.2 239.0,336.7 258.5,334.1 279.7,337.6 300.8,338.5 322.0,335.5 340.0,340.5 386.0,341.5 404.0,347.5 426.2,359.0 447.0,377.2 447.0,575.7 420.0,574.8 380.0,561.7 330.0,544.5 280.0,516.7 200.0,486.5 160.0,473.9 133.8,458.3 111.5,453.0 83.3,461.2 71.4,467.2 0.0,474.6" fill="#333333" stroke="#5a5a5a" stroke-width="1"/><line x1="7.5" y1="187" x2="7.5" y2="581" stroke="#5a5a5a" stroke-dasharray="1,1" shape-rendering="crispEdges"/><line x1="28.5" y1="187" x2="28.5" y2="581" stroke="#5a5a5a" stroke-dasharray="1,1" shape-rendering="crispEdges"/><line x1="49.5" y1="187" x2="49.5" y2="581" stroke="#5a5a5a" stroke-dasharray="1,1" shape-rendering="crispEdges"/><line x1="70.5" y1="187" x2="70.5" y2="581" stroke="#5a5a5a" stroke-dasharray="1,1" shape-rendering="crispEdges"/><line x1="91.5" y1="187" x2="91.5" y2="581" stroke="#5a5a5a" stroke-dasharray="1,1" shape-rendering="crispEdges"/><line x1="112.5" y1="187" x2="112.5" y2="581" stroke="#5a5a5a" stroke-dasharray="1,1" shape-rendering="crispEdges"/><line x1="133.5" y1="187" x2="133.5" y2="581" stroke="#5a5a5a" stroke-dasharray="1,1" shape-rendering="crispEdges"/><line x1="154.5" y1="187" x2="154.5" y2="581" stroke="#5a5a5a" stroke-dasharray="1,1" shape-rendering="crispEdges"/><line x1="175.5" y1="187" x2="175.5" y2="581" stroke="#5a5a5a" stroke-dasharray="1,1" shape-rendering="crispEdges"/><line x1="196.5" y1="187" x2="196.5" y2="581" stroke="#5a5a5a" stroke-dasharray="1,1" shape-rendering="crispEdges"/><line x1="217.5" y1="187" x2="217.5" y2="581" stroke="#5a5a5a" stroke-dasharray="1,1" shape-rendering="crispEdges"/><line x1="238.5" y1="187" x2="238.5" y2="581" stroke="#5a5a5a" stroke-dasharray="1,1" shape-rendering="crispEdges"/><line x1="259.5" y1="187" x2="259.5" y2="581" stroke="#5a5a5a" stroke-dasharray="1,1" shape-rendering="crispEdges"/><line x1="280.5" y1="187" x2="280.5" y2="581" stroke="#5a5a5a" stroke-dasharray="1,1" shape-rendering="crispEdges"/><line x1="301.5" y1="187" x2="301.5" y2="581" stroke="#5a5a5a" stroke-dasharray="1,1" shape-rendering="crispEdges"/><line x1="322.5" y1="187" x2="322.5" y2="581" stroke="#5a5a5a" stroke-dasharray="1,1" shape-rendering="crispEdges"/><line x1="343.5" y1="187" x2="343.5" y2="581" stroke="#5a5a5a" stroke-dasharray="1,1" shape-rendering="crispEdges"/><line x1="364.5" y1="187" x2="364.5" y2="581" stroke="#5a5a5a" stroke-dasharray="1,1" shape-rendering="crispEdges"/><line x1="385.5" y1="187" x2="385.5" y2="581" stroke="#5a5a5a" stroke-dasharray="1,1" shape-rendering="crispEdges"/><line x1="406.5" y1="187" x2="406.5" y2="581" stroke="#5a5a5a" stroke-dasharray="1,1" shape-rendering="crispEdges"/><line x1="427.5" y1="187" x2="427.5" y2="581" stroke="#5a5a5a" stroke-dasharray="1,1" shape-rendering="crispEdges"/><line x1="448.5" y1="187" x2="448.5" y2="581" stroke="#5a5a5a" stroke-dasharray="1,1" shape-rendering="crispEdges"/><line x1="469.5" y1="187" x2="469.5" y2="581" stroke="#5a5a5a" stroke-dasharray="1,1" shape-rendering="crispEdges"/><line x1="490.5" y1="187" x2="490.5" y2="581" stroke="#5a5a5a" stroke-dasharray="1,1" shape-rendering="crispEdges"/><line x1="0" y1="220.5" x2="497" y2="220.5" stroke="#5a5a5a" stroke-dasharray="1,1" shape-rendering="crispEdges"/><line x1="0" y1="254.5" x2="497" y2="254.5" stroke="#5a5a5a" stroke-dasharray="1,1" shape-rendering="crispEdges"/><line x1="0" y1="289.5" x2="497" y2="289.5" stroke="#5a5a5a" stroke-dasharray="1,1" shape-rendering="crispEdges"/><line x1="0" y1="324.5" x2="497" y2="324.5" stroke="#5a5a5a" stroke-dasharray="1,1" shape-rendering="crispEdges"/><line x1="0" y1="358.5" x2="497" y2="358.5" stroke="#5a5a5a" stroke-dasharray="1,1" shape-rendering="crispEdges"/><line x1="0" y1="393.5" x2="497" y2="393.5" stroke="#5a5a5a" stroke-dasharray="1,1" shape-rendering="crispEdges"/><line x1="0" y1="427.5" x2="497" y2="427.5" stroke="#5a5a5a" stroke-dasharray="1,1" shape-rendering="crispEdges"/><line x1="0" y1="462.5" x2="497" y2="462.5" stroke="#5a5a5a" stroke-dasharray="1,1" shape-rendering="crispEdges"/><line x1="0" y1="496.5" x2="497" y2="496.5" stroke="#5a5a5a" stroke-dasharray="1,1" shape-rendering="crispEdges"/><line x1="0" y1="531.5" x2="497" y2="531.5" stroke="#5a5a5a" stroke-dasharray="1,1" shape-rendering="crispEdges"/><line x1="0" y1="565.5" x2="497" y2="565.5" stroke="#5a5a5a" stroke-dasharray="1,1" shape-rendering="crispEdges"/><line x1="14" y1="203.5" x2="497" y2="203.5" stroke="#5a5a5a" stroke-dasharray="3,12" shape-rendering="crispEdges"/><line x1="14" y1="237.5" x2="497" y2="237.5" stroke="#5a5a5a" stroke-dasharray="3,12" shape-rendering="crispEdges"/><line x1="14" y1="272.5" x2="497" y2="272.5" stroke="#5a5a5a" stroke-dasharray="3,12" shape-rendering="crispEdges"/><line x1="14" y1="306.5" x2="497" y2="306.5" stroke="#5a5a5a" stroke-dasharray="3,12" shape-rendering="crispEdges"/><line x1="14" y1="341.5" x2="497" y2="341.5" stroke="#5a5a5a" stroke-dasharray="3,12" shape-rendering="crispEdges"/><line x1="14" y1="375.5" x2="497" y2="375.5" stroke="#5a5a5a" stroke-dasharray="3,12" shape-rendering="crispEdges"/><line x1="14" y1="410.5" x2="497" y2="410.5" stroke="#5a5a5a" stroke-dasharray="3,12" shape-rendering="crispEdges"/><line x1="14" y1="444.5" x2="497" y2="444.5" stroke="#5a5a5a" stroke-dasharray="3,12" shape-rendering="crispEdges"/><line x1="14" y1="479.5" x2="497" y2="479.5" stroke="#5a5a5a" stroke-dasharray="3,12" shape-rendering="crispEdges"/><line x1="14" y1="513.5" x2="497" y2="513.5" stroke="#5a5a5a" stroke-dasharray="3,12" shape-rendering="crispEdges"/><line x1="14" y1="548.5" x2="497" y2="548.5" stroke="#5a5a5a" stroke-dasharray="3,12" shape-rendering="crispEdges"/><line x1="14" y1="583.5" x2="497" y2="583.5" stroke="#5a5a5a" stroke-dasharray="3,12" shape-rendering="crispEdges"/><line x1="0" y1="340.5" x2="497" y2="273.4" stroke="#fff" stroke-width="1.15"/><line x1="0" y1="334.8" x2="497" y2="456" stroke="#ff1010" stroke-width="1.2"/><polyline points="0,375 60,375.5 135,384 255,402 340,418.5 447,436.5" fill="none" stroke="#00e0f0" stroke-width="1.3"/><polyline points="0,371.3 88,388 160,406 260,416 300,425.6 340,439.7 447,472.5" fill="none" stroke="#8c8c8c" stroke-width="1"/><line x1="90" y1="388" x2="497" y2="525.5" stroke="#fff" stroke-width="1.15"/><line x1="0" y1="469" x2="497" y2="539.6" stroke="#fff" stroke-width="1.15"/><line x1="89.7" y1="477.5" x2="383" y2="578.5" stroke="#fff" stroke-width="1.15"/><line x1="0" y1="442.4" x2="494" y2="442.4" stroke="#ff1010" stroke-width="1.2"/><line x1="0" y1="466.4" x2="494" y2="466.4" stroke="#ff1010" stroke-width="1.2"/><line x1="0" y1="573.4" x2="494" y2="573.4" stroke="#ff1010" stroke-width="1.2"/><line x1="0" y1="486.3" x2="494" y2="486.3" stroke="#98f098" stroke-width="1.2"/><polyline points="0,462.3 111,460 200,460.5 300,461 447,465.5" fill="none" stroke="#60e8b0" stroke-width="1"/><rect x="5.2" y="377.5" width="2.2" height="34.89999999999998" fill="#00e000"/><rect x="-0.7999999999999998" y="390.9" width="7" height="2.2" fill="#00e000"/><rect x="6.2" y="378" width="7" height="2.2" fill="#00e000"/><rect x="26" y="350.4" width="2.2" height="58.900000000000034" fill="#00e000"/><rect x="20" y="404.8" width="7" height="2.2" fill="#00e000"/><rect x="27" y="357" width="7" height="2.2" fill="#00e000"/><rect x="47.3" y="343.6" width="2.2" height="28.799999999999955" fill="#ff0000"/><rect x="41.3" y="343.2" width="7" height="2.2" fill="#ff0000"/><rect x="48.3" y="371" width="7" height="2.2" fill="#ff0000"/><rect x="68.2" y="333.3" width="2.2" height="70.89999999999998" fill="#ff0000"/><rect x="62.2" y="337" width="7" height="2.2" fill="#ff0000"/><rect x="69.2" y="387.8" width="7" height="2.2" fill="#ff0000"/><rect x="89" y="362" width="2.2" height="48.30000000000001" fill="#ff0000"/><rect x="83" y="374.9" width="7" height="2.2" fill="#ff0000"/><rect x="90" y="394" width="7" height="2.2" fill="#ff0000"/><rect x="109.9" y="398.4" width="2.2" height="46.900000000000034" fill="#ff0000"/><rect x="103.9" y="397.4" width="7" height="2.2" fill="#ff0000"/><rect x="110.9" y="440" width="7" height="2.2" fill="#ff0000"/><rect x="130.7" y="435.2" width="2.2" height="56.80000000000001" fill="#00e000"/><rect x="124.69999999999999" y="455.8" width="7" height="2.2" fill="#00e000"/><rect x="131.7" y="436.5" width="7" height="2.2" fill="#00e000"/><rect x="152.3" y="436.4" width="2.2" height="54.60000000000002" fill="#ff0000"/><rect x="146.3" y="443.6" width="7" height="2.2" fill="#ff0000"/><rect x="153.3" y="480" width="7" height="2.2" fill="#ff0000"/><rect x="173.4" y="461" width="2.2" height="43.39999999999998" fill="#ff0000"/><rect x="167.4" y="466.6" width="7" height="2.2" fill="#ff0000"/><rect x="174.4" y="469.9" width="7" height="2.2" fill="#ff0000"/><rect x="194" y="445" width="2.2" height="38.30000000000001" fill="#ff0000"/><rect x="188" y="450" width="7" height="2.2" fill="#ff0000"/><rect x="195" y="454.8" width="7" height="2.2" fill="#ff0000"/><rect x="215.2" y="431.7" width="2.2" height="45.69999999999999" fill="#00e000"/><rect x="209.2" y="473" width="7" height="2.2" fill="#00e000"/><rect x="216.2" y="433.7" width="7" height="2.2" fill="#00e000"/><rect x="236.3" y="455" width="2.2" height="39" fill="#ff0000"/><rect x="230.3" y="461" width="7" height="2.2" fill="#ff0000"/><rect x="237.3" y="478" width="7" height="2.2" fill="#ff0000"/><rect x="257.4" y="460" width="2.2" height="52.60000000000002" fill="#ff0000"/><rect x="251.39999999999998" y="460.5" width="7" height="2.2" fill="#ff0000"/><rect x="258.4" y="494.8" width="7" height="2.2" fill="#ff0000"/><rect x="277.8" y="482.8" width="2.2" height="47.80000000000001" fill="#00e000"/><rect x="271.8" y="513.3" width="7" height="2.2" fill="#00e000"/><rect x="278.8" y="499.4" width="7" height="2.2" fill="#00e000"/><rect x="298.7" y="492.5" width="2.2" height="40.5" fill="#ff0000"/><rect x="292.7" y="497" width="7" height="2.2" fill="#ff0000"/><rect x="299.7" y="526.4" width="7" height="2.2" fill="#ff0000"/><rect x="319.6" y="519" width="2.2" height="34.799999999999955" fill="#00e000"/><rect x="313.6" y="546.8" width="7" height="2.2" fill="#00e000"/><rect x="320.6" y="539" width="7" height="2.2" fill="#00e000"/><rect x="342" y="508.8" width="2.2" height="40.400000000000034" fill="#00e000"/><rect x="336" y="540.3" width="7" height="2.2" fill="#00e000"/><rect x="343" y="518" width="7" height="2.2" fill="#00e000"/><rect x="362.4" y="482.8" width="2.2" height="29.19999999999999" fill="#00e000"/><rect x="356.4" y="500.8" width="7" height="2.2" fill="#00e000"/><rect x="363.4" y="483" width="7" height="2.2" fill="#00e000"/><rect x="383.3" y="506.4" width="2.2" height="36.80000000000007" fill="#ff0000"/><rect x="377.3" y="511" width="7" height="2.2" fill="#ff0000"/><rect x="384.3" y="535.2" width="7" height="2.2" fill="#ff0000"/><rect x="404.2" y="512" width="2.2" height="37.200000000000045" fill="#ff0000"/><rect x="398.2" y="514.7" width="7" height="2.2" fill="#ff0000"/><rect x="405.2" y="525" width="7" height="2.2" fill="#ff0000"/><rect x="425.1" y="494.8" width="2.2" height="41.900000000000034" fill="#00e000"/><rect x="419.1" y="518" width="7" height="2.2" fill="#00e000"/><rect x="426.1" y="515.7" width="7" height="2.2" fill="#00e000"/><rect x="446" y="486.5" width="2.2" height="39.5" fill="#ff0000"/><rect x="440" y="486.4" width="7" height="2.2" fill="#ff0000"/><rect x="447" y="521" width="7" height="2.2" fill="#ff0000"/><text x="408.00" y="481.50" font-size="12" fill="#b8f0a0" font-family="Liberation Sans" textLength="38.00" lengthAdjust="spacingAndGlyphs" >6430,60</text></g><rect x="499" y="189" width="3" height="1" fill="#f0f0f0" shape-rendering="crispEdges"/><rect x="499" y="193" width="3" height="1" fill="#f0f0f0" shape-rendering="crispEdges"/><rect x="499" y="196" width="3" height="1" fill="#f0f0f0" shape-rendering="crispEdges"/><rect x="499" y="200" width="3" height="1" fill="#f0f0f0" shape-rendering="crispEdges"/><rect x="498" y="203" width="4" height="1" fill="#f0f0f0" shape-rendering="crispEdges"/><rect x="499" y="207" width="3" height="1" fill="#f0f0f0" shape-rendering="crispEdges"/><rect x="499" y="210" width="3" height="1" fill="#f0f0f0" shape-rendering="crispEdges"/><rect x="499" y="213" width="3" height="1" fill="#f0f0f0" shape-rendering="crispEdges"/><rect x="499" y="217" width="3" height="1" fill="#f0f0f0" shape-rendering="crispEdges"/><rect x="497" y="220" width="5" height="1" fill="#f0f0f0" shape-rendering="crispEdges"/><rect x="499" y="224" width="3" height="1" fill="#f0f0f0" shape-rendering="crispEdges"/><rect x="499" y="227" width="3" height="1" fill="#f0f0f0" shape-rendering="crispEdges"/><rect x="499" y="231" width="3" height="1" fill="#f0f0f0" shape-rendering="crispEdges"/><rect x="499" y="234" width="3" height="1" fill="#f0f0f0" shape-rendering="crispEdges"/><rect x="498" y="238" width="4" height="1" fill="#f0f0f0" shape-rendering="crispEdges"/><rect x="499" y="241" width="3" height="1" fill="#f0f0f0" shape-rendering="crispEdges"/><rect x="499" y="245" width="3" height="1" fill="#f0f0f0" shape-rendering="crispEdges"/><rect x="499" y="248" width="3" height="1" fill="#f0f0f0" shape-rendering="crispEdges"/><rect x="499" y="251" width="3" height="1" fill="#f0f0f0" shape-rendering="crispEdges"/><rect x="497" y="255" width="5" height="1" fill="#f0f0f0" shape-rendering="crispEdges"/><rect x="499" y="258" width="3" height="1" fill="#f0f0f0" shape-rendering="crispEdges"/><rect x="499" y="262" width="3" height="1" fill="#f0f0f0" shape-rendering="crispEdges"/><rect x="499" y="265" width="3" height="1" fill="#f0f0f0" shape-rendering="crispEdges"/><rect x="499" y="269" width="3" height="1" fill="#f0f0f0" shape-rendering="crispEdges"/><rect x="498" y="272" width="4" height="1" fill="#f0f0f0" shape-rendering="crispEdges"/><rect x="499" y="276" width="3" height="1" fill="#f0f0f0" shape-rendering="crispEdges"/><rect x="499" y="279" width="3" height="1" fill="#f0f0f0" shape-rendering="crispEdges"/><rect x="499" y="283" width="3" height="1" fill="#f0f0f0" shape-rendering="crispEdges"/><rect x="499" y="286" width="3" height="1" fill="#f0f0f0" shape-rendering="crispEdges"/><rect x="497" y="289" width="5" height="1" fill="#f0f0f0" shape-rendering="crispEdges"/><rect x="499" y="293" width="3" height="1" fill="#f0f0f0" shape-rendering="crispEdges"/><rect x="499" y="296" width="3" height="1" fill="#f0f0f0" shape-rendering="crispEdges"/><rect x="499" y="300" width="3" height="1" fill="#f0f0f0" shape-rendering="crispEdges"/><rect x="499" y="303" width="3" height="1" fill="#f0f0f0" shape-rendering="crispEdges"/><rect x="498" y="307" width="4" height="1" fill="#f0f0f0" shape-rendering="crispEdges"/><rect x="499" y="310" width="3" height="1" fill="#f0f0f0" shape-rendering="crispEdges"/><rect x="499" y="314" width="3" height="1" fill="#f0f0f0" shape-rendering="crispEdges"/><rect x="499" y="317" width="3" height="1" fill="#f0f0f0" shape-rendering="crispEdges"/><rect x="499" y="321" width="3" height="1" fill="#f0f0f0" shape-rendering="crispEdges"/><rect x="497" y="324" width="5" height="1" fill="#f0f0f0" shape-rendering="crispEdges"/><rect x="499" y="327" width="3" height="1" fill="#f0f0f0" shape-rendering="crispEdges"/><rect x="499" y="331" width="3" height="1" fill="#f0f0f0" shape-rendering="crispEdges"/><rect x="499" y="334" width="3" height="1" fill="#f0f0f0" shape-rendering="crispEdges"/><rect x="499" y="338" width="3" height="1" fill="#f0f0f0" shape-rendering="crispEdges"/><rect x="498" y="341" width="4" height="1" fill="#f0f0f0" shape-rendering="crispEdges"/><rect x="499" y="345" width="3" height="1" fill="#f0f0f0" shape-rendering="crispEdges"/><rect x="499" y="348" width="3" height="1" fill="#f0f0f0" shape-rendering="crispEdges"/><rect x="499" y="352" width="3" height="1" fill="#f0f0f0" shape-rendering="crispEdges"/><rect x="499" y="355" width="3" height="1" fill="#f0f0f0" shape-rendering="crispEdges"/><rect x="497" y="359" width="5" height="1" fill="#f0f0f0" shape-rendering="crispEdges"/><rect x="499" y="362" width="3" height="1" fill="#f0f0f0" shape-rendering="crispEdges"/><rect x="499" y="365" width="3" height="1" fill="#f0f0f0" shape-rendering="crispEdges"/><rect x="499" y="369" width="3" height="1" fill="#f0f0f0" shape-rendering="crispEdges"/><rect x="499" y="372" width="3" height="1" fill="#f0f0f0" shape-rendering="crispEdges"/><rect x="498" y="376" width="4" height="1" fill="#f0f0f0" shape-rendering="crispEdges"/><rect x="499" y="379" width="3" height="1" fill="#f0f0f0" shape-rendering="crispEdges"/><rect x="499" y="383" width="3" height="1" fill="#f0f0f0" shape-rendering="crispEdges"/><rect x="499" y="386" width="3" height="1" fill="#f0f0f0" shape-rendering="crispEdges"/><rect x="499" y="390" width="3" height="1" fill="#f0f0f0" shape-rendering="crispEdges"/><rect x="497" y="393" width="5" height="1" fill="#f0f0f0" shape-rendering="crispEdges"/><rect x="499" y="397" width="3" height="1" fill="#f0f0f0" shape-rendering="crispEdges"/><rect x="499" y="400" width="3" height="1" fill="#f0f0f0" shape-rendering="crispEdges"/><rect x="499" y="403" width="3" height="1" fill="#f0f0f0" shape-rendering="crispEdges"/><rect x="499" y="407" width="3" height="1" fill="#f0f0f0" shape-rendering="crispEdges"/><rect x="498" y="410" width="4" height="1" fill="#f0f0f0" shape-rendering="crispEdges"/><rect x="499" y="414" width="3" height="1" fill="#f0f0f0" shape-rendering="crispEdges"/><rect x="499" y="417" width="3" height="1" fill="#f0f0f0" shape-rendering="crispEdges"/><rect x="499" y="421" width="3" height="1" fill="#f0f0f0" shape-rendering="crispEdges"/><rect x="499" y="424" width="3" height="1" fill="#f0f0f0" shape-rendering="crispEdges"/><rect x="497" y="428" width="5" height="1" fill="#f0f0f0" shape-rendering="crispEdges"/><rect x="499" y="431" width="3" height="1" fill="#f0f0f0" shape-rendering="crispEdges"/><rect x="499" y="435" width="3" height="1" fill="#f0f0f0" shape-rendering="crispEdges"/><rect x="499" y="438" width="3" height="1" fill="#f0f0f0" shape-rendering="crispEdges"/><rect x="499" y="441" width="3" height="1" fill="#f0f0f0" shape-rendering="crispEdges"/><rect x="498" y="445" width="4" height="1" fill="#f0f0f0" shape-rendering="crispEdges"/><rect x="499" y="448" width="3" height="1" fill="#f0f0f0" shape-rendering="crispEdges"/><rect x="499" y="452" width="3" height="1" fill="#f0f0f0" shape-rendering="crispEdges"/><rect x="499" y="455" width="3" height="1" fill="#f0f0f0" shape-rendering="crispEdges"/><rect x="499" y="459" width="3" height="1" fill="#f0f0f0" shape-rendering="crispEdges"/><rect x="497" y="462" width="5" height="1" fill="#f0f0f0" shape-rendering="crispEdges"/><rect x="499" y="466" width="3" height="1" fill="#f0f0f0" shape-rendering="crispEdges"/><rect x="499" y="469" width="3" height="1" fill="#f0f0f0" shape-rendering="crispEdges"/><rect x="499" y="473" width="3" height="1" fill="#f0f0f0" shape-rendering="crispEdges"/><rect x="499" y="476" width="3" height="1" fill="#f0f0f0" shape-rendering="crispEdges"/><rect x="498" y="479" width="4" height="1" fill="#f0f0f0" shape-rendering="crispEdges"/><rect x="499" y="483" width="3" height="1" fill="#f0f0f0" shape-rendering="crispEdges"/><rect x="499" y="486" width="3" height="1" fill="#f0f0f0" shape-rendering="crispEdges"/><rect x="499" y="490" width="3" height="1" fill="#f0f0f0" shape-rendering="crispEdges"/><rect x="499" y="493" width="3" height="1" fill="#f0f0f0" shape-rendering="crispEdges"/><rect x="497" y="497" width="5" height="1" fill="#f0f0f0" shape-rendering="crispEdges"/><rect x="499" y="500" width="3" height="1" fill="#f0f0f0" shape-rendering="crispEdges"/><rect x="499" y="504" width="3" height="1" fill="#f0f0f0" shape-rendering="crispEdges"/><rect x="499" y="507" width="3" height="1" fill="#f0f0f0" shape-rendering="crispEdges"/><rect x="499" y="511" width="3" height="1" fill="#f0f0f0" shape-rendering="crispEdges"/><rect x="498" y="514" width="4" height="1" fill="#f0f0f0" shape-rendering="crispEdges"/><rect x="499" y="517" width="3" height="1" fill="#f0f0f0" shape-rendering="crispEdges"/><rect x="499" y="521" width="3" height="1" fill="#f0f0f0" shape-rendering="crispEdges"/><rect x="499" y="524" width="3" height="1" fill="#f0f0f0" shape-rendering="crispEdges"/><rect x="499" y="528" width="3" height="1" fill="#f0f0f0" shape-rendering="crispEdges"/><rect x="497" y="531" width="5" height="1" fill="#f0f0f0" shape-rendering="crispEdges"/><rect x="499" y="535" width="3" height="1" fill="#f0f0f0" shape-rendering="crispEdges"/><rect x="499" y="538" width="3" height="1" fill="#f0f0f0" shape-rendering="crispEdges"/><rect x="499" y="542" width="3" height="1" fill="#f0f0f0" shape-rendering="crispEdges"/><rect x="499" y="545" width="3" height="1" fill="#f0f0f0" shape-rendering="crispEdges"/><rect x="498" y="549" width="4" height="1" fill="#f0f0f0" shape-rendering="crispEdges"/><rect x="499" y="552" width="3" height="1" fill="#f0f0f0" shape-rendering="crispEdges"/><rect x="499" y="555" width="3" height="1" fill="#f0f0f0" shape-rendering="crispEdges"/><rect x="499" y="559" width="3" height="1" fill="#f0f0f0" shape-rendering="crispEdges"/><rect x="499" y="562" width="3" height="1" fill="#f0f0f0" shape-rendering="crispEdges"/><rect x="497" y="566" width="5" height="1" fill="#f0f0f0" shape-rendering="crispEdges"/><rect x="499" y="569" width="3" height="1" fill="#f0f0f0" shape-rendering="crispEdges"/><rect x="499" y="573" width="3" height="1" fill="#f0f0f0" shape-rendering="crispEdges"/><rect x="499" y="576" width="3" height="1" fill="#f0f0f0" shape-rendering="crispEdges"/><rect x="499" y="580" width="3" height="1" fill="#f0f0f0" shape-rendering="crispEdges"/><text x="-2.50" y="183.80" font-size="11.8" fill="#d8d800" font-family="Liberation Sans" textLength="19.00" lengthAdjust="spacingAndGlyphs" >, -2)</text><text x="466.00" y="183.80" font-size="11.8" fill="#00d000" font-family="Liberation Sans" textLength="31.00" lengthAdjust="spacingAndGlyphs" >täglich</text><text x="505.60" y="224.70" font-size="12" fill="#e6dc78" font-family="Liberation Sans" textLength="38.00" lengthAdjust="spacingAndGlyphs" >7200,00</text><text x="505.60" y="259.24" font-size="12" fill="#e6dc78" font-family="Liberation Sans" textLength="38.00" lengthAdjust="spacingAndGlyphs" >7100,00</text><text x="505.60" y="293.78" font-size="12" fill="#e6dc78" font-family="Liberation Sans" textLength="38.00" lengthAdjust="spacingAndGlyphs" >7000,00</text><text x="505.60" y="328.32" font-size="12" fill="#e6dc78" font-family="Liberation Sans" textLength="38.00" lengthAdjust="spacingAndGlyphs" >6900,00</text><text x="505.60" y="362.86" font-size="12" fill="#e6dc78" font-family="Liberation Sans" textLength="38.00" lengthAdjust="spacingAndGlyphs" >6800,00</text><text x="505.60" y="397.40" font-size="12" fill="#e6dc78" font-family="Liberation Sans" textLength="38.00" lengthAdjust="spacingAndGlyphs" >6700,00</text><text x="505.60" y="431.94" font-size="12" fill="#e6dc78" font-family="Liberation Sans" textLength="38.00" lengthAdjust="spacingAndGlyphs" >6600,00</text><text x="505.60" y="466.48" font-size="12" fill="#e6dc78" font-family="Liberation Sans" textLength="38.00" lengthAdjust="spacingAndGlyphs" >6500,00</text><text x="505.60" y="501.02" font-size="12" fill="#e6dc78" font-family="Liberation Sans" textLength="38.00" lengthAdjust="spacingAndGlyphs" >6400,00</text><text x="505.60" y="535.56" font-size="12" fill="#e6dc78" font-family="Liberation Sans" textLength="38.00" lengthAdjust="spacingAndGlyphs" >6300,00</text><text x="505.60" y="570.10" font-size="12" fill="#e6dc78" font-family="Liberation Sans" textLength="38.00" lengthAdjust="spacingAndGlyphs" >6200,00</text><rect x="502" y="430.5" width="40.6" height="12.4" fill="#00ffff"/><text x="503.30" y="441.30" font-size="12" fill="#000" font-family="Liberation Sans" textLength="38.50" lengthAdjust="spacingAndGlyphs" >6574,67</text><rect x="502" y="459.3" width="40.6" height="11.3" fill="#80ff98"/><text x="503.30" y="469.00" font-size="12" fill="#000" font-family="Liberation Sans" textLength="38.50" lengthAdjust="spacingAndGlyphs" >6490,47</text><rect x="502" y="470.6" width="40.6" height="11.7" fill="#808080"/><text x="503.30" y="480.70" font-size="12" fill="#000" font-family="Liberation Sans" textLength="38.50" lengthAdjust="spacingAndGlyphs" >6458,43</text><rect x="502" y="516.4" width="40.6" height="11.6" fill="#ffff00"/><text x="503.30" y="526.40" font-size="12" fill="#000" font-family="Liberation Sans" textLength="38.50" lengthAdjust="spacingAndGlyphs" >6327,55</text><rect x="0" y="581" width="501" height="1" fill="#e8e8e8"/><rect x="0" y="582.5" width="501" height="1.2" fill="#f0e040"/><rect x="501" y="582" width="46" height="20" fill="#f0f0f0"/><text x="0.13" y="597.30" font-size="13" fill="#e6dc78" font-family="Liberation Sans" textLength="13.74" lengthAdjust="spacingAndGlyphs" >26</text><text x="21.13" y="597.30" font-size="13" fill="#e6dc78" font-family="Liberation Sans" textLength="13.74" lengthAdjust="spacingAndGlyphs" >27</text><text x="42.13" y="597.30" font-size="13" fill="#e6dc78" font-family="Liberation Sans" textLength="13.74" lengthAdjust="spacingAndGlyphs" >30</text><text x="60.05" y="597.30" font-size="13" fill="#e6dc78" font-family="Liberation Sans" textLength="19.90" lengthAdjust="spacingAndGlyphs" >Mai</text><text x="105.13" y="597.30" font-size="13" fill="#e6dc78" font-family="Liberation Sans" textLength="13.74" lengthAdjust="spacingAndGlyphs" >04</text><text x="126.13" y="597.30" font-size="13" fill="#e6dc78" font-family="Liberation Sans" textLength="13.74" lengthAdjust="spacingAndGlyphs" >07</text><text x="147.13" y="597.30" font-size="13" fill="#e6dc78" font-family="Liberation Sans" textLength="13.74" lengthAdjust="spacingAndGlyphs" >08</text><text x="168.13" y="597.30" font-size="13" fill="#e6dc78" font-family="Liberation Sans" textLength="13.74" lengthAdjust="spacingAndGlyphs" >09</text><text x="189.13" y="597.30" font-size="13" fill="#e6dc78" font-family="Liberation Sans" textLength="13.74" lengthAdjust="spacingAndGlyphs" >10</text><text x="210.59" y="597.30" font-size="13" fill="#e6dc78" font-family="Liberation Sans" textLength="12.82" lengthAdjust="spacingAndGlyphs" >11</text><text x="231.13" y="597.30" font-size="13" fill="#e6dc78" font-family="Liberation Sans" textLength="13.74" lengthAdjust="spacingAndGlyphs" >14</text><text x="252.13" y="597.30" font-size="13" fill="#e6dc78" font-family="Liberation Sans" textLength="13.74" lengthAdjust="spacingAndGlyphs" >15</text><text x="273.13" y="597.30" font-size="13" fill="#e6dc78" font-family="Liberation Sans" textLength="13.74" lengthAdjust="spacingAndGlyphs" >16</text><text x="294.13" y="597.30" font-size="13" fill="#e6dc78" font-family="Liberation Sans" textLength="13.74" lengthAdjust="spacingAndGlyphs" >17</text><text x="315.13" y="597.30" font-size="13" fill="#e6dc78" font-family="Liberation Sans" textLength="13.74" lengthAdjust="spacingAndGlyphs" >18</text><text x="336.13" y="597.30" font-size="13" fill="#e6dc78" font-family="Liberation Sans" textLength="13.74" lengthAdjust="spacingAndGlyphs" >21</text><text x="357.13" y="597.30" font-size="13" fill="#e6dc78" font-family="Liberation Sans" textLength="13.74" lengthAdjust="spacingAndGlyphs" >22</text><text x="378.13" y="597.30" font-size="13" fill="#e6dc78" font-family="Liberation Sans" textLength="13.74" lengthAdjust="spacingAndGlyphs" >23</text><text x="399.13" y="597.30" font-size="13" fill="#e6dc78" font-family="Liberation Sans" textLength="13.74" lengthAdjust="spacingAndGlyphs" >24</text><text x="420.13" y="597.30" font-size="13" fill="#e6dc78" font-family="Liberation Sans" textLength="13.74" lengthAdjust="spacingAndGlyphs" >25</text><text x="441.13" y="597.30" font-size="13" fill="#e6dc78" font-family="Liberation Sans" textLength="13.74" lengthAdjust="spacingAndGlyphs" >28</text><text x="462.13" y="597.30" font-size="13" fill="#e6dc78" font-family="Liberation Sans" textLength="13.74" lengthAdjust="spacingAndGlyphs" >29</text><text x="483.13" y="597.30" font-size="13" fill="#e6dc78" font-family="Liberation Sans" textLength="13.74" lengthAdjust="spacingAndGlyphs" >30</text><rect x="7.0" y="581" width="1.5" height="3" fill="#f0e040"/><rect x="28.0" y="581" width="1.5" height="3" fill="#f0e040"/><rect x="49.0" y="581" width="1.5" height="3" fill="#f0e040"/><rect x="70.0" y="581" width="1.5" height="3" fill="#f0e040"/><rect x="91.0" y="581" width="1.5" height="3" fill="#f0e040"/><rect x="112.0" y="581" width="1.5" height="3" fill="#f0e040"/><rect x="133.0" y="581" width="1.5" height="3" fill="#f0e040"/><rect x="154.0" y="581" width="1.5" height="3" fill="#f0e040"/><rect x="175.0" y="581" width="1.5" height="3" fill="#f0e040"/><rect x="196.0" y="581" width="1.5" height="3" fill="#f0e040"/><rect x="217.0" y="581" width="1.5" height="3" fill="#f0e040"/><rect x="238.0" y="581" width="1.5" height="3" fill="#f0e040"/><rect x="259.0" y="581" width="1.5" height="3" fill="#f0e040"/><rect x="280.0" y="581" width="1.5" height="3" fill="#f0e040"/><rect x="301.0" y="581" width="1.5" height="3" fill="#f0e040"/><rect x="322.0" y="581" width="1.5" height="3" fill="#f0e040"/><rect x="343.0" y="581" width="1.5" height="3" fill="#f0e040"/><rect x="364.0" y="581" width="1.5" height="3" fill="#f0e040"/><rect x="385.0" y="581" width="1.5" height="3" fill="#f0e040"/><rect x="406.0" y="581" width="1.5" height="3" fill="#f0e040"/><rect x="427.0" y="581" width="1.5" height="3" fill="#f0e040"/><rect x="448.0" y="581" width="1.5" height="3" fill="#f0e040"/><rect x="469.0" y="581" width="1.5" height="3" fill="#f0e040"/><rect x="490.0" y="581" width="1.5" height="3" fill="#f0e040"/><path d="M516.5 597.5 L529 585.5" stroke="#111" stroke-width="1.3"/><path d="M525.3 589.2 Q527 586.8 529.3 587.6 Q531 589.6 530.3 591.6 Q533 591.2 533.3 593.2 Q532.1 596 529.3 595.6 Q528.3 593.6 526.9 592.6 Q525.5 591.6 525.3 589.2Z" fill="#0a1ee8" stroke="#000050" stroke-width="1"/><rect x="0" y="602" width="547" height="17" fill="#eaeaea"/><rect x="510.5" y="603.5" width="18" height="14" rx="2" fill="url(#thumbg)" stroke="#8a8a8a"/><path d="M516 607v7M519 607v7M522 607v7" stroke="#555" stroke-width="1.2"/><path d="M537 606 L541 610 L537 614Z" fill="#404040"/></svg><div class="a" style="left:0;top:631px;width:1076px;height:22px;background:#efebe9"></div><div class="a" style="left:0;top:632px;width:1076px;height:2px;background:#fbfbfb"></div><div class="a" style="left:0;top:634px;width:1076px;height:1px;background:#8c8c8c"></div><div class="a" style="left:0;top:635px;width:1076px;height:1px;background:#ffffff"></div><div class="a" style="left:809px;top:636px;width:1px;height:16px;background:#d6d2ce"></div><div class="a" style="left:829px;top:636px;width:1px;height:16px;background:#d6d2ce"></div><div class="a" style="left:886px;top:636px;width:1px;height:16px;background:#d6d2ce"></div><div class="a" style="left:928.5px;top:636px;width:1px;height:16px;background:#d6d2ce"></div><div class="a" style="left:1068.5px;top:636px;width:1px;height:16px;background:#d6d2ce"></div><svg width="1076" height="682"><text x="813.00" y="649.00" font-size="12.6" fill="#111" font-family="Liberation Sans" textLength="11.00" lengthAdjust="spacingAndGlyphs" >17</text><text x="851.00" y="649.00" font-size="12.6" fill="#111" font-family="Liberation Sans" textLength="30.20" lengthAdjust="spacingAndGlyphs" >Seite1</text><text x="890.00" y="649.00" font-size="12.6" fill="#111" font-family="Liberation Sans" textLength="35.80" lengthAdjust="spacingAndGlyphs" >LOCAL</text><text x="932.70" y="649.00" font-size="12.6" fill="#111" font-family="Liberation Sans" textLength="132.00" lengthAdjust="spacingAndGlyphs" >E-mail nicht konfiguriert.</text></svg><svg width="1076" height="682"><rect x="835.5" y="638.5" width="8.5" height="6.5" fill="#80c8f8" stroke="#7070b0"/><rect x="839" y="645" width="1.5" height="2" fill="#555"/><rect x="832.5" y="648" width="14" height="2" fill="#c0c8e8" stroke="#5a6090" stroke-width="0.8"/><rect x="837.5" y="645.5" width="4.5" height="4.5" fill="#f0c030" stroke="#a07010" stroke-width="0.7"/></svg><div class="a" style="left:0;top:653px;width:1076px;height:29px;background:linear-gradient(#1e3a44 0,#1e3a44 1px,#6aa6b2 1px,#5a98a6 3px,#4c8c9a 50%,#42828f)"></div><div class="a" style="left:560px;top:653px;width:300px;height:29px;background:radial-gradient(ellipse at 45% 100%,rgba(0,25,35,0.6),rgba(0,0,0,0) 70%)"></div><div class="a" style="left:210.5px;top:654px;width:38.5px;height:28px;border:1px solid #a8ccd4;border-radius:3px;background:linear-gradient(135deg,rgba(255,255,255,0.45),rgba(255,255,255,0.08))"></div><div class="a" style="left:1062.5px;top:653px;width:14px;height:29px;background:linear-gradient(90deg,#3a6a78,#7aaab6);border-left:1px solid #20404a"></div><svg width="1076" height="682"><text x="275.20" y="671.80" font-size="12.2" fill="#ffffff" font-family="Liberation Sans" textLength="41.00" lengthAdjust="spacingAndGlyphs" >Adresse</text><text x="716.40" y="669.50" font-size="12" fill="#ffffff" font-family="Liberation Sans" textLength="14.50" lengthAdjust="spacingAndGlyphs" >DE</text><text x="1011.00" y="672.00" font-size="12.2" fill="#ffffff" font-family="Liberation Sans" textLength="26.00" lengthAdjust="spacingAndGlyphs" >17:28</text></svg><div class="a" style="left:320.5px;top:657.5px;width:370px;height:22.5px;background:#fff;border:1px solid #7a98a4;border-radius:2px"></div><div class="a" style="left:664px;top:658px;width:1px;height:21px;background:#a0a0a0"></div><div class="a" style="left:652px;top:666px;width:0;height:0;border-left:4px solid transparent;border-right:4px solid transparent;border-top:5px solid #000"></div><svg width="1076" height="682"><rect x="260" y="660.0" width="1.5" height="1.5" fill="#1c3c46"/><rect x="260" y="663.3" width="1.5" height="1.5" fill="#1c3c46"/><rect x="260" y="666.6" width="1.5" height="1.5" fill="#1c3c46"/><rect x="260" y="669.9" width="1.5" height="1.5" fill="#1c3c46"/><rect x="260" y="673.2" width="1.5" height="1.5" fill="#1c3c46"/><rect x="260" y="676.5" width="1.5" height="1.5" fill="#1c3c46"/><rect x="263" y="660.0" width="1.5" height="1.5" fill="#1c3c46"/><rect x="263" y="663.3" width="1.5" height="1.5" fill="#1c3c46"/><rect x="263" y="666.6" width="1.5" height="1.5" fill="#1c3c46"/><rect x="263" y="669.9" width="1.5" height="1.5" fill="#1c3c46"/><rect x="263" y="673.2" width="1.5" height="1.5" fill="#1c3c46"/><rect x="263" y="676.5" width="1.5" height="1.5" fill="#1c3c46"/><rect x="266" y="660.0" width="1.5" height="1.5" fill="#1c3c46"/><rect x="266" y="663.3" width="1.5" height="1.5" fill="#1c3c46"/><rect x="266" y="666.6" width="1.5" height="1.5" fill="#1c3c46"/><rect x="266" y="669.9" width="1.5" height="1.5" fill="#1c3c46"/><rect x="266" y="673.2" width="1.5" height="1.5" fill="#1c3c46"/><rect x="266" y="676.5" width="1.5" height="1.5" fill="#1c3c46"/><rect x="699" y="660.0" width="1.5" height="1.5" fill="#1c3c46"/><rect x="699" y="663.3" width="1.5" height="1.5" fill="#1c3c46"/><rect x="699" y="666.6" width="1.5" height="1.5" fill="#1c3c46"/><rect x="699" y="669.9" width="1.5" height="1.5" fill="#1c3c46"/><rect x="699" y="673.2" width="1.5" height="1.5" fill="#1c3c46"/><rect x="699" y="676.5" width="1.5" height="1.5" fill="#1c3c46"/><rect x="702" y="660.0" width="1.5" height="1.5" fill="#1c3c46"/><rect x="702" y="663.3" width="1.5" height="1.5" fill="#1c3c46"/><rect x="702" y="666.6" width="1.5" height="1.5" fill="#1c3c46"/><rect x="702" y="669.9" width="1.5" height="1.5" fill="#1c3c46"/><rect x="702" y="673.2" width="1.5" height="1.5" fill="#1c3c46"/><rect x="702" y="676.5" width="1.5" height="1.5" fill="#1c3c46"/><rect x="705" y="660.0" width="1.5" height="1.5" fill="#1c3c46"/><rect x="705" y="663.3" width="1.5" height="1.5" fill="#1c3c46"/><rect x="705" y="666.6" width="1.5" height="1.5" fill="#1c3c46"/><rect x="705" y="669.9" width="1.5" height="1.5" fill="#1c3c46"/><rect x="705" y="673.2" width="1.5" height="1.5" fill="#1c3c46"/><rect x="705" y="676.5" width="1.5" height="1.5" fill="#1c3c46"/><rect x="14.8" y="661" width="10.5" height="15" fill="#dce8f6" stroke="#6a8ab8" stroke-width="0.8"/><rect x="16" y="662.5" width="8" height="2.5" fill="#f09030"/><rect x="16.2" y="666" width="7.6" height="1.2" fill="#a8c0e0"/><path d="M16.5 669h1.5M19 669h1.5M21.5 669h1.5M16.5 671.5h1.5M19 671.5h1.5M21.5 671.5h1.5M16.5 674h1.5M19 674h1.5" stroke="#4a70b0" stroke-width="1.3"/><rect x="22.3" y="670.5" width="1.6" height="4.5" fill="#f09030"/><circle cx="59" cy="664" r="4.2" fill="#f0b020" stroke="#b07000" stroke-width="0.8"/><circle cx="64.5" cy="668" r="3.6" fill="#f0b020" stroke="#b07000" stroke-width="0.8"/><circle cx="57.5" cy="671" r="3.2" fill="#f0b020" stroke="#b07000" stroke-width="0.8"/><circle cx="58" cy="671" r="1" fill="#402000"/><path d="M63 669.5 h5.5 v3.5 q0 3 -2.75 4 q-2.75 -1 -2.75 -4z" fill="#2870d0" stroke="#ddd" stroke-width="0.6"/><path d="M65.75 669.5 v7.5 M63 673 h5.5" stroke="#f0d020" stroke-width="1.1"/><rect x="96.5" y="660" width="15" height="15.5" rx="2.5" fill="#4a2a60" stroke="#1a0a20" stroke-width="0.8"/><text x="104" y="671.5" font-size="9" fill="#fff" text-anchor="middle" font-family="Liberation Sans" font-weight="bold">FS</text><rect x="138" y="660" width="15" height="15.5" rx="3" fill="#101010"/><circle cx="142.5" cy="665" r="1.1" fill="#eee"/><circle cx="145.5" cy="664.5" r="1.1" fill="#eee"/><circle cx="148.5" cy="665" r="1.1" fill="#eee"/><circle cx="141.5" cy="668" r="1.1" fill="#eee"/><circle cx="144.5" cy="668" r="1.1" fill="#eee"/><circle cx="147.5" cy="668" r="1.1" fill="#eee"/><circle cx="143.5" cy="671" r="1.1" fill="#eee"/><circle cx="146.5" cy="671" r="1.1" fill="#eee"/><rect x="179.8" y="659.8" width="16" height="16" rx="1" fill="#fff4e0" stroke="#f09818" stroke-width="1.8"/><circle cx="187.8" cy="667.8" r="5" fill="none" stroke="#e08010" stroke-width="1.1"/><path d="M187.8 664.5v3.5h2.5" stroke="#e08010" fill="none" stroke-width="1.1"/><path d="M222 664 L236 660 L238 670 L224 674Z" fill="#f0e040" stroke="#222" stroke-width="1"/><path d="M221 675 L228 667 L231 670 L239 661" stroke="#00a0e0" stroke-width="1.6" fill="none"/><path d="M672 668 l5 -5 l0 3 l4 0" stroke="#2a78d0" stroke-width="2" fill="none"/><path d="M684 668 l-5 5 l0 -3 l-4 0" stroke="#2a78d0" stroke-width="2" fill="none"/><path d="M748 663.5 Q754.5 661 761 663.5 L761 669 Q760 674 754.5 676.5 Q749 674 748 669Z" fill="#d81818" stroke="#f4f4f4" stroke-width="1.2"/><path d="M757.5 666 Q754.5 664.5 752 666 Q750.5 669 752 672 Q755 673.5 757.5 671.5 L757.5 669 L755 669" stroke="#fff" stroke-width="1.5" fill="none"/><circle cx="778.7" cy="668.8" r="6.8" fill="#d0d0d0" stroke="#1a1a1a" stroke-width="1.6"/><circle cx="778" cy="668" r="3.5" fill="#e8e8e8"/><path d="M797 673 L802 662 L806 665 L810 672 L811 676 L797 676Z" fill="#f0b818" stroke="#a06800" stroke-width="0.8"/><path d="M804 668 L808 676 L800 676Z" fill="#ffe040" stroke="#000" stroke-width="0.7"/><path d="M804 670.5v3" stroke="#000" stroke-width="1.2"/><ellipse cx="826.8" cy="669" rx="6" ry="8" fill="#0c2a6a"/><path d="M823.5 665.5 L830 671.5 L826.8 674.5 V663.5 L830 666.5 L823.5 672.5" stroke="#fff" fill="none" stroke-width="1.3"/><rect x="843.5" y="662" width="3" height="14" rx="1" fill="#2a4a3a" stroke="#70a080" stroke-width="0.6"/><ellipse cx="853" cy="670" rx="4.5" ry="6.5" fill="#3a7060" stroke="#1c3a30" stroke-width="1"/><circle cx="874.5" cy="669" r="7" fill="#e85020"/><path d="M867.5 669 A7 7 0 0 1 881.5 669Z" fill="#90c030"/><path d="M867.5 669 A7 7 0 0 0 874.5 676 V669Z" fill="#2080d0"/><path d="M869 666.5 H880 M874.5 666.5 V676" stroke="#fff" stroke-width="2"/><path d="M892.5 662 V676" stroke="#fff" stroke-width="1.6"/><path d="M893 662.5 Q897 661.5 900 664 L906 664 L903.5 667.5 L906 670 Q900 670 897 668.5 L893 668.5Z" fill="#f4f4f4"/><rect x="915" y="661" width="15" height="15" rx="1" fill="#0a0a0a"/><path d="M915.5 667 Q921 664 927 665 M915.5 670 Q921 667 927 668 M915.5 673 Q920 670 925 671" stroke="#d0b080" stroke-width="1.2" fill="none"/><path d="M924.5 662.5 v2.5 l1.5 1.5 v9 M926 666 l1.5 -1.5 v-2.5" stroke="#30c8e8" stroke-width="1.6" fill="none"/><rect x="941.5" y="664.5" width="11" height="8" fill="#2a4a58" stroke="#f0f0f0" stroke-width="1.3"/><path d="M945 675.5 h5 M947.5 672.5 v3" stroke="#fff" stroke-width="1.3"/><path d="M940 661 v13 M938 661 v4 h4 v-4" stroke="#fff" stroke-width="1.2" fill="none"/><path d="M963.5 666 h2.5 l4 -4 v14 l-4 -4 h-2.5z" fill="#e8e8e8" stroke="#888" stroke-width="0.6"/><circle cx="973.5" cy="672.3" r="4.3" fill="#fff" stroke="#e01818" stroke-width="2.2"/><path d="M970.8 675 l5.4 -5.4" stroke="#e01818" stroke-width="1.8"/></svg></body></html>
